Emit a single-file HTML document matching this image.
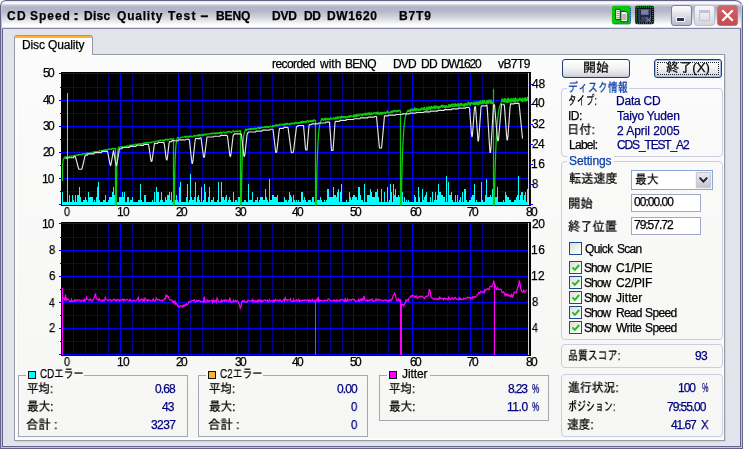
<!DOCTYPE html>
<html lang="ja"><head><meta charset="utf-8"><title>CD Speed : Disc Quality Test</title>
<style>
html,body{margin:0;padding:0;background:#fff;}
body{width:743px;height:449px;overflow:hidden;font-family:"Liberation Sans","IPAGothic",sans-serif;font-size:12px;}
#win{position:relative;width:743px;height:449px;overflow:hidden;background:#62628a;border-radius:6px 8px 0 0;}
#win div,#win span,#win i,#win b{position:absolute;box-sizing:border-box;}
.t{white-space:pre;line-height:16px;height:16px;will-change:transform;-webkit-text-stroke:0.25px currentColor;}
.frameL{left:1px;top:4px;width:1px;height:444px;background:#c3c3d9;}
.frameR{left:741px;top:4px;width:1px;height:444px;background:#c3c3d9;}
.frameB{left:1px;top:447px;width:741px;height:1px;background:#c3c3d9;}
.titlebar{left:1px;top:1px;width:741px;height:27px;border-radius:5px 7px 0 0;
  background:linear-gradient(to bottom,#d4d4e0 0px,#f6f6fa 1px,#ffffff 2.2px,#cacad8 4px,#b4b4c8 6px,#b6b6c9 10px,#cdcdd9 15px,#e6e6ec 20px,#fcfcfd 23.5px,#ffffff 25.5px,#dcdce6 26.6px,#d0d0dc 27px);}
.client{left:3px;top:29px;width:737px;height:417px;background:#e3e3eb;}
.pane{left:14px;top:54px;width:711px;height:387px;border:1px solid #949aa6;
  background:linear-gradient(to bottom,#fbfbfb 0,#f6f6f4 100%);box-shadow:1px 1px 0 #d6d5cc,inset 0 0 0 2px #fdfdfd;}
.tab{left:14px;top:35px;width:79px;height:20px;border:1px solid #949aa6;border-bottom:none;border-radius:3px 3px 0 0;background:#fbfbfb;overflow:hidden;}
.tab i{left:-1px;top:-1px;width:79px;height:3px;background:#ffb428;border-radius:3px 3px 0 0;}
.btn{height:19px;border:1px solid #1c3c74;border-radius:3px;background:linear-gradient(to bottom,#ffffff 0,#f4f4f6 45%,#dcdce6 85%,#c6c6d6 100%);}
.btn.def{box-shadow:inset 0 0 0 1px #a8bce8;}
.btn.def i{left:2px;top:2px;right:2px;bottom:2px;border:1px dotted #222;}
.grp{border:1px solid #cdcde0;border-radius:4px;}
.grpb{border:1px solid #a3a9b3;}
.cap{background:#f9f9f8;height:12px;}
.sq{width:8px;height:8px;border:1px solid #111;}
.edit{border:1px solid #a0a8c6;background:#fff;}
.cb{width:13px;height:13px;border:1px solid #1c4a8c;background:linear-gradient(135deg,#dcdcd8 0,#f4f4f2 60%,#ffffff 100%);}
.cb svg{position:absolute;left:0px;top:0px;}
.tb{width:21px;height:21px;border-radius:3px;}

.tsep{left:1px;top:28px;width:741px;height:1px;background:#8686a6;}

</style></head><body>
<div id="win">
<div class="titlebar"></div><div class="tsep"></div>
<div class="frameL"></div><div class="frameR"></div><div class="frameB"></div>
<div class="client"></div>
<!-- title bar icons -->
<svg width="46" height="22" viewBox="0 0 46 22" style="position:absolute;left:611px;top:4px">
 <rect x="0.9" y="1.7" width="19" height="18.6" rx="2.2" fill="#08c808"/>
 <path d="M19.4 4v14.5q0 1.4 -1.4 1.4H3" stroke="#144a8a" stroke-width="1" fill="none" stroke-dasharray="1 1"/>
 <rect x="4.6" y="5.3" width="4.6" height="10.2" fill="#ececdc" stroke="#2a2a30" stroke-width="0.9"/>
 <path d="M5.6 7.5h2.8M5.6 9.5h2.8M5.6 11.5h2.8M5.6 13.5h2.8" stroke="#8a8a90" stroke-width="0.8"/>
 <path d="M9.9 7.4h5l1.9 1.9v8.4h-6.9z" fill="#f2f2e6" stroke="#1e1e24" stroke-width="0.9"/>
 <path d="M11.2 11h4.2M11.2 13h4.2M11.2 15h4.2" stroke="#70707a" stroke-width="0.9"/>
 <rect x="24.1" y="1.7" width="19" height="18.6" rx="2.2" fill="#0c1418"/>
 <rect x="25.4" y="3" width="16.4" height="16" rx="1.5" fill="none" stroke="#10b010" stroke-width="1.3" stroke-dasharray="1 1"/>
 <rect x="28" y="5.4" width="11.4" height="11.6" fill="#20283c" stroke="#50587c" stroke-width="0.9"/>
 <rect x="30" y="5.8" width="7.6" height="5" fill="#7a7ea8"/>
 <rect x="30.4" y="12.8" width="6.8" height="4" fill="#3c4464"/>
 <path d="M35 13.5l5 4.5M40 13.5l-5 4.5" stroke="#8c90b4" stroke-width="1"/>
</svg>
<div class="tb" style="left:671px;top:5px;background:linear-gradient(to bottom,#fdfdfe 0,#e4e4ec 40%,#b8b8cc 100%);border:1px solid #7c7ca6;">
 <b style="left:4px;top:11px;width:9px;height:5px;background:#2a3152;border:1px solid #f4f4fa;"></b></div>
<div class="tb" style="left:694px;top:5px;background:linear-gradient(to bottom,#fafafc 0,#e8e8ee 50%,#d4d4de 100%);border:1px solid #c0c0d2;">
 <b style="left:4px;top:4px;width:11px;height:11px;border:1px solid #c4c4d0;border-top-width:3px;"></b></div>
<div class="tb" style="left:717px;top:5px;background:linear-gradient(to bottom,#d26468 0,#c9565b 50%,#c24e54 100%);border:1px solid #c8747a;">
 <svg width="19" height="19" viewBox="0 0 19 19" style="position:absolute;left:0;top:0"><path d="M5 5L14 14M14 5L5 14" stroke="#fff" stroke-width="2.2" fill="none" stroke-linecap="square"/></svg></div>

<div class="pane"></div>
<div class="tab"><i></i></div>
<svg width="743" height="449" viewBox="0 0 743 449" style="position:absolute;left:0;top:0" shape-rendering="crispEdges">
<rect x="61" y="72" width="470" height="134" fill="#000"/>
<rect x="73" y="73" width="1" height="132" fill="#000092"/>
<rect x="85" y="73" width="1" height="132" fill="#000092"/>
<rect x="97" y="73" width="1" height="132" fill="#000092"/>
<rect x="108" y="73" width="1" height="132" fill="#000092"/>
<rect x="120" y="73" width="1" height="132" fill="#0000ff"/>
<rect x="132" y="73" width="1" height="132" fill="#000092"/>
<rect x="143" y="73" width="1" height="132" fill="#000092"/>
<rect x="155" y="73" width="1" height="132" fill="#000092"/>
<rect x="167" y="73" width="1" height="132" fill="#000092"/>
<rect x="178" y="73" width="1" height="132" fill="#0000ff"/>
<rect x="190" y="73" width="1" height="132" fill="#000092"/>
<rect x="202" y="73" width="1" height="132" fill="#000092"/>
<rect x="213" y="73" width="1" height="132" fill="#000092"/>
<rect x="225" y="73" width="1" height="132" fill="#000092"/>
<rect x="237" y="73" width="1" height="132" fill="#0000ff"/>
<rect x="248" y="73" width="1" height="132" fill="#000092"/>
<rect x="260" y="73" width="1" height="132" fill="#000092"/>
<rect x="272" y="73" width="1" height="132" fill="#000092"/>
<rect x="283" y="73" width="1" height="132" fill="#000092"/>
<rect x="295" y="73" width="1" height="132" fill="#0000ff"/>
<rect x="307" y="73" width="1" height="132" fill="#000092"/>
<rect x="318" y="73" width="1" height="132" fill="#000092"/>
<rect x="330" y="73" width="1" height="132" fill="#000092"/>
<rect x="342" y="73" width="1" height="132" fill="#000092"/>
<rect x="353" y="73" width="1" height="132" fill="#0000ff"/>
<rect x="365" y="73" width="1" height="132" fill="#000092"/>
<rect x="377" y="73" width="1" height="132" fill="#000092"/>
<rect x="388" y="73" width="1" height="132" fill="#000092"/>
<rect x="400" y="73" width="1" height="132" fill="#000092"/>
<rect x="412" y="73" width="1" height="132" fill="#0000ff"/>
<rect x="423" y="73" width="1" height="132" fill="#000092"/>
<rect x="435" y="73" width="1" height="132" fill="#000092"/>
<rect x="447" y="73" width="1" height="132" fill="#000092"/>
<rect x="458" y="73" width="1" height="132" fill="#000092"/>
<rect x="470" y="73" width="1" height="132" fill="#0000ff"/>
<rect x="482" y="73" width="1" height="132" fill="#000092"/>
<rect x="493" y="73" width="1" height="132" fill="#000092"/>
<rect x="505" y="73" width="1" height="132" fill="#000092"/>
<rect x="517" y="73" width="1" height="132" fill="#000092"/>
<rect x="59" y="73" width="469" height="1" fill="#0000ff"/>
<rect x="60" y="87" width="468" height="1" fill="#0000a0"/>
<rect x="59" y="100" width="469" height="1" fill="#0000ff"/>
<rect x="60" y="113" width="468" height="1" fill="#0000a0"/>
<rect x="59" y="126" width="469" height="1" fill="#0000ff"/>
<rect x="60" y="139" width="468" height="1" fill="#0000a0"/>
<rect x="59" y="152" width="469" height="1" fill="#0000ff"/>
<rect x="60" y="165" width="468" height="1" fill="#0000a0"/>
<rect x="59" y="178" width="469" height="1" fill="#0000ff"/>
<rect x="60" y="191" width="468" height="1" fill="#0000a0"/>
<rect x="59" y="204" width="469" height="1" fill="#0000ff"/>
<rect x="61" y="222" width="470" height="134" fill="#000"/>
<rect x="73" y="223" width="1" height="132" fill="#000092"/>
<rect x="85" y="223" width="1" height="132" fill="#000092"/>
<rect x="97" y="223" width="1" height="132" fill="#000092"/>
<rect x="108" y="223" width="1" height="132" fill="#000092"/>
<rect x="120" y="223" width="1" height="132" fill="#0000ff"/>
<rect x="132" y="223" width="1" height="132" fill="#000092"/>
<rect x="143" y="223" width="1" height="132" fill="#000092"/>
<rect x="155" y="223" width="1" height="132" fill="#000092"/>
<rect x="167" y="223" width="1" height="132" fill="#000092"/>
<rect x="178" y="223" width="1" height="132" fill="#0000ff"/>
<rect x="190" y="223" width="1" height="132" fill="#000092"/>
<rect x="202" y="223" width="1" height="132" fill="#000092"/>
<rect x="213" y="223" width="1" height="132" fill="#000092"/>
<rect x="225" y="223" width="1" height="132" fill="#000092"/>
<rect x="237" y="223" width="1" height="132" fill="#0000ff"/>
<rect x="248" y="223" width="1" height="132" fill="#000092"/>
<rect x="260" y="223" width="1" height="132" fill="#000092"/>
<rect x="272" y="223" width="1" height="132" fill="#000092"/>
<rect x="283" y="223" width="1" height="132" fill="#000092"/>
<rect x="295" y="223" width="1" height="132" fill="#0000ff"/>
<rect x="307" y="223" width="1" height="132" fill="#000092"/>
<rect x="318" y="223" width="1" height="132" fill="#000092"/>
<rect x="330" y="223" width="1" height="132" fill="#000092"/>
<rect x="342" y="223" width="1" height="132" fill="#000092"/>
<rect x="353" y="223" width="1" height="132" fill="#0000ff"/>
<rect x="365" y="223" width="1" height="132" fill="#000092"/>
<rect x="377" y="223" width="1" height="132" fill="#000092"/>
<rect x="388" y="223" width="1" height="132" fill="#000092"/>
<rect x="400" y="223" width="1" height="132" fill="#000092"/>
<rect x="412" y="223" width="1" height="132" fill="#0000ff"/>
<rect x="423" y="223" width="1" height="132" fill="#000092"/>
<rect x="435" y="223" width="1" height="132" fill="#000092"/>
<rect x="447" y="223" width="1" height="132" fill="#000092"/>
<rect x="458" y="223" width="1" height="132" fill="#000092"/>
<rect x="470" y="223" width="1" height="132" fill="#0000ff"/>
<rect x="482" y="223" width="1" height="132" fill="#000092"/>
<rect x="493" y="223" width="1" height="132" fill="#000092"/>
<rect x="505" y="223" width="1" height="132" fill="#000092"/>
<rect x="517" y="223" width="1" height="132" fill="#000092"/>
<rect x="59" y="223" width="469" height="1" fill="#0000ff"/>
<rect x="60" y="237" width="468" height="1" fill="#0000a0"/>
<rect x="59" y="250" width="469" height="1" fill="#0000ff"/>
<rect x="60" y="263" width="468" height="1" fill="#0000a0"/>
<rect x="59" y="276" width="469" height="1" fill="#0000ff"/>
<rect x="60" y="289" width="468" height="1" fill="#0000a0"/>
<rect x="59" y="302" width="469" height="1" fill="#0000ff"/>
<rect x="60" y="315" width="468" height="1" fill="#0000a0"/>
<rect x="59" y="328" width="469" height="1" fill="#0000ff"/>
<rect x="60" y="341" width="468" height="1" fill="#0000a0"/>
<rect x="59" y="354" width="469" height="1" fill="#0000ff"/>
<path d="M530.25 73V205" stroke="#0000e0" stroke-width="1.5" stroke-dasharray="1 1" fill="none"/>
<rect x="529" y="84" width="4" height="1" fill="#0000ff"/>
<rect x="529" y="104" width="4" height="1" fill="#0000ff"/>
<rect x="529" y="124" width="4" height="1" fill="#0000ff"/>
<rect x="529" y="144" width="4" height="1" fill="#0000ff"/>
<rect x="529" y="164" width="4" height="1" fill="#0000ff"/>
<rect x="529" y="184" width="4" height="1" fill="#0000ff"/>
<rect x="529" y="204" width="4" height="1" fill="#0000ff"/>
<path d="M62 205v-13h1v13zM63 205v-3h1v3zM64 205v-3h1v3zM65 205v-3h1v3zM66 205v-3h1v3zM67 205v-112h1v112zM68 205v-3h1v3zM69 205v-10h1v10zM70 205v-3h1v3zM71 205v-3h1v3zM72 205v-10h1v10zM73 205v-5h1v5zM74 205v-3h1v3zM75 205v-10h1v10zM76 205v-3h1v3zM77 205v-10h1v10zM78 205v-10h1v10zM79 205v-18h1v18zM80 205v-8h1v8zM81 205v-3h1v3zM82 205v-3h1v3zM83 205v-5h1v5zM84 205v-5h1v5zM85 205v-8h1v8zM86 205v-5h1v5zM87 205v-3h1v3zM88 205v-13h1v13zM89 205v-8h1v8zM90 205v-8h1v8zM91 205v-8h1v8zM92 205v-8h1v8zM93 205v-3h1v3zM94 205v-5h1v5zM95 205v-3h1v3zM96 205v-8h1v8zM97 205v-18h1v18zM98 205v-23h1v23zM99 205v-5h1v5zM100 205v-3h1v3zM101 205v-3h1v3zM102 205v-3h1v3zM103 205v-5h1v5zM104 205v-5h1v5zM105 205v-10h1v10zM106 205v-3h1v3zM107 205v-3h1v3zM108 205v-5h1v5zM109 205v-8h1v8zM110 205v-8h1v8zM111 205v-8h1v8zM112 205v-13h1v13zM113 205v-18h1v18zM114 205v-10h1v10zM115 205v-5h1v5zM116 205v-13h1v13zM117 205v-3h1v3zM118 205v-3h1v3zM119 205v-8h1v8zM120 205v-8h1v8zM121 205v-8h1v8zM122 205v-13h1v13zM123 205v-8h1v8zM124 205v-13h1v13zM125 205v-3h1v3zM126 205v-3h1v3zM127 205v-8h1v8zM128 205v-8h1v8zM129 205v-3h1v3zM130 205v-5h1v5zM131 205v-5h1v5zM132 205v-8h1v8zM133 205v-3h1v3zM134 205v-3h1v3zM135 205v-3h1v3zM136 205v-3h1v3zM137 205v-3h1v3zM138 205v-5h1v5zM139 205v-5h1v5zM140 205v-21h1v21zM141 205v-5h1v5zM142 205v-3h1v3zM143 205v-3h1v3zM144 205v-10h1v10zM145 205v-10h1v10zM146 205v-3h1v3zM147 205v-3h1v3zM148 205v-3h1v3zM149 205v-3h1v3zM150 205v-3h1v3zM151 205v-3h1v3zM152 205v-5h1v5zM153 205v-3h1v3zM154 205v-13h1v13zM155 205v-3h1v3zM156 205v-18h1v18zM157 205v-13h1v13zM158 205v-13h1v13zM159 205v-3h1v3zM160 205v-5h1v5zM161 205v-13h1v13zM162 205v-5h1v5zM163 205v-3h1v3zM164 205v-3h1v3zM165 205v-8h1v8zM166 205v-5h1v5zM167 205v-10h1v10zM168 205v-10h1v10zM169 205v-13h1v13zM170 205v-5h1v5zM171 205v-13h1v13zM172 205v-3h1v3zM173 205v-3h1v3zM174 205v-16h1v16zM175 205v-5h1v5zM176 205v-10h1v10zM177 205v-5h1v5zM178 205v-3h1v3zM179 205v-18h1v18zM180 205v-23h1v23zM181 205v-3h1v3zM182 205v-3h1v3zM183 205v-3h1v3zM184 205v-3h1v3zM185 205v-3h1v3zM186 205v-8h1v8zM187 205v-21h1v21zM188 205v-3h1v3zM189 205v-5h1v5zM190 205v-31h1v31zM191 205v-8h1v8zM192 205v-5h1v5zM193 205v-5h1v5zM194 205v-8h1v8zM195 205v-23h1v23zM196 205v-3h1v3zM197 205v-8h1v8zM198 205v-10h1v10zM199 205v-5h1v5zM200 205v-3h1v3zM201 205v-18h1v18zM202 205v-3h1v3zM203 205v-5h1v5zM204 205v-21h1v21zM205 205v-13h1v13zM206 205v-3h1v3zM207 205v-3h1v3zM208 205v-8h1v8zM209 205v-18h1v18zM210 205v-3h1v3zM211 205v-5h1v5zM212 205v-5h1v5zM213 205v-8h1v8zM214 205v-3h1v3zM215 205v-3h1v3zM216 205v-3h1v3zM217 205v-5h1v5zM218 205v-23h1v23zM219 205v-3h1v3zM220 205v-3h1v3zM221 205v-23h1v23zM222 205v-8h1v8zM223 205v-8h1v8zM224 205v-5h1v5zM225 205v-8h1v8zM226 205v-10h1v10zM227 205v-3h1v3zM228 205v-5h1v5zM229 205v-8h1v8zM230 205v-5h1v5zM231 205v-3h1v3zM232 205v-3h1v3zM233 205v-13h1v13zM234 205v-3h1v3zM235 205v-5h1v5zM236 205v-5h1v5zM237 205v-3h1v3zM238 205v-8h1v8zM239 205v-8h1v8zM240 205v-8h1v8zM241 205v-31h1v31zM242 205v-3h1v3zM243 205v-3h1v3zM244 205v-5h1v5zM245 205v-5h1v5zM246 205v-3h1v3zM247 205v-3h1v3zM248 205v-21h1v21zM249 205v-5h1v5zM250 205v-5h1v5zM251 205v-5h1v5zM252 205v-13h1v13zM253 205v-3h1v3zM254 205v-3h1v3zM255 205v-5h1v5zM256 205v-5h1v5zM257 205v-8h1v8zM258 205v-3h1v3zM259 205v-5h1v5zM260 205v-8h1v8zM261 205v-8h1v8zM262 205v-8h1v8zM263 205v-5h1v5zM264 205v-5h1v5zM265 205v-16h1v16zM266 205v-8h1v8zM267 205v-5h1v5zM268 205v-3h1v3zM269 205v-26h1v26zM270 205v-5h1v5zM271 205v-5h1v5zM272 205v-10h1v10zM273 205v-10h1v10zM274 205v-8h1v8zM275 205v-8h1v8zM276 205v-8h1v8zM277 205v-10h1v10zM278 205v-3h1v3zM279 205v-3h1v3zM280 205v-3h1v3zM281 205v-3h1v3zM282 205v-3h1v3zM283 205v-3h1v3zM284 205v-8h1v8zM285 205v-5h1v5zM286 205v-5h1v5zM287 205v-3h1v3zM288 205v-5h1v5zM289 205v-13h1v13zM290 205v-10h1v10zM291 205v-8h1v8zM292 205v-3h1v3zM293 205v-10h1v10zM294 205v-5h1v5zM295 205v-3h1v3zM296 205v-5h1v5zM297 205v-3h1v3zM298 205v-5h1v5zM299 205v-3h1v3zM300 205v-3h1v3zM301 205v-13h1v13zM302 205v-13h1v13zM303 205v-5h1v5zM304 205v-8h1v8zM305 205v-5h1v5zM306 205v-3h1v3zM307 205v-3h1v3zM308 205v-5h1v5zM309 205v-5h1v5zM310 205v-5h1v5zM311 205v-3h1v3zM312 205v-8h1v8zM313 205v-8h1v8zM314 205v-3h1v3zM315 205v-3h1v3zM316 205v-10h1v10zM317 205v-5h1v5zM318 205v-5h1v5zM319 205v-5h1v5zM320 205v-8h1v8zM321 205v-5h1v5zM322 205v-3h1v3zM323 205v-3h1v3zM324 205v-5h1v5zM325 205v-3h1v3zM326 205v-5h1v5zM327 205v-16h1v16zM328 205v-16h1v16zM329 205v-8h1v8zM330 205v-8h1v8zM331 205v-8h1v8zM332 205v-8h1v8zM333 205v-18h1v18zM334 205v-10h1v10zM335 205v-10h1v10zM336 205v-8h1v8zM337 205v-13h1v13zM338 205v-16h1v16zM339 205v-3h1v3zM340 205v-13h1v13zM341 205v-21h1v21zM342 205v-3h1v3zM343 205v-3h1v3zM344 205v-3h1v3zM345 205v-3h1v3zM346 205v-5h1v5zM347 205v-3h1v3zM348 205v-3h1v3zM349 205v-13h1v13zM350 205v-8h1v8zM351 205v-5h1v5zM352 205v-8h1v8zM353 205v-10h1v10zM354 205v-10h1v10zM355 205v-8h1v8zM356 205v-8h1v8zM357 205v-5h1v5zM358 205v-18h1v18zM359 205v-18h1v18zM360 205v-10h1v10zM361 205v-5h1v5zM362 205v-5h1v5zM363 205v-3h1v3zM364 205v-21h1v21zM365 205v-3h1v3zM366 205v-3h1v3zM367 205v-10h1v10zM368 205v-10h1v10zM369 205v-10h1v10zM370 205v-16h1v16zM371 205v-13h1v13zM372 205v-8h1v8zM373 205v-8h1v8zM374 205v-8h1v8zM375 205v-13h1v13zM376 205v-13h1v13zM377 205v-16h1v16zM378 205v-8h1v8zM379 205v-3h1v3zM380 205v-3h1v3zM381 205v-16h1v16zM382 205v-3h1v3zM383 205v-3h1v3zM384 205v-13h1v13zM385 205v-3h1v3zM386 205v-3h1v3zM387 205v-18h1v18zM388 205v-3h1v3zM389 205v-5h1v5zM390 205v-21h1v21zM391 205v-13h1v13zM392 205v-3h1v3zM393 205v-21h1v21zM394 205v-10h1v10zM395 205v-16h1v16zM396 205v-8h1v8zM397 205v-8h1v8zM398 205v-10h1v10zM399 205v-8h1v8zM400 205v-5h1v5zM401 205v-5h1v5zM402 205v-13h1v13zM403 205v-3h1v3zM404 205v-8h1v8zM405 205v-3h1v3zM406 205v-5h1v5zM407 205v-3h1v3zM408 205v-5h1v5zM409 205v-3h1v3zM410 205v-3h1v3zM411 205v-3h1v3zM412 205v-3h1v3zM413 205v-3h1v3zM414 205v-10h1v10zM415 205v-8h1v8zM416 205v-3h1v3zM417 205v-3h1v3zM418 205v-18h1v18zM419 205v-8h1v8zM420 205v-3h1v3zM421 205v-3h1v3zM422 205v-16h1v16zM423 205v-5h1v5zM424 205v-8h1v8zM425 205v-10h1v10zM426 205v-13h1v13zM427 205v-3h1v3zM428 205v-3h1v3zM429 205v-3h1v3zM430 205v-8h1v8zM431 205v-3h1v3zM432 205v-13h1v13zM433 205v-3h1v3zM434 205v-5h1v5zM435 205v-13h1v13zM436 205v-5h1v5zM437 205v-10h1v10zM438 205v-21h1v21zM439 205v-13h1v13zM440 205v-13h1v13zM441 205v-10h1v10zM442 205v-10h1v10zM443 205v-8h1v8zM444 205v-8h1v8zM445 205v-3h1v3zM446 205v-29h1v29zM447 205v-3h1v3zM448 205v-23h1v23zM449 205v-10h1v10zM450 205v-10h1v10zM451 205v-13h1v13zM452 205v-5h1v5zM453 205v-3h1v3zM454 205v-3h1v3zM455 205v-10h1v10zM456 205v-3h1v3zM457 205v-10h1v10zM458 205v-3h1v3zM459 205v-5h1v5zM460 205v-8h1v8zM461 205v-3h1v3zM462 205v-13h1v13zM463 205v-3h1v3zM464 205v-16h1v16zM465 205v-16h1v16zM466 205v-5h1v5zM467 205v-3h1v3zM468 205v-3h1v3zM469 205v-5h1v5zM470 205v-5h1v5zM471 205v-8h1v8zM472 205v-10h1v10zM473 205v-10h1v10zM474 205v-21h1v21zM475 205v-3h1v3zM476 205v-5h1v5zM477 205v-3h1v3zM478 205v-3h1v3zM479 205v-3h1v3zM480 205v-3h1v3zM481 205v-23h1v23zM482 205v-5h1v5zM483 205v-3h1v3zM484 205v-3h1v3zM485 205v-10h1v10zM486 205v-26h1v26zM487 205v-8h1v8zM488 205v-8h1v8zM489 205v-8h1v8zM490 205v-10h1v10zM491 205v-8h1v8zM492 205v-16h1v16zM493 205v-3h1v3zM494 205v-3h1v3zM495 205v-8h1v8zM496 205v-8h1v8zM497 205v-18h1v18zM498 205v-3h1v3zM499 205v-3h1v3zM500 205v-3h1v3zM501 205v-3h1v3zM502 205v-3h1v3zM503 205v-5h1v5zM504 205v-3h1v3zM505 205v-13h1v13zM506 205v-10h1v10zM507 205v-8h1v8zM508 205v-8h1v8zM509 205v-5h1v5zM510 205v-5h1v5zM511 205v-3h1v3zM512 205v-3h1v3zM513 205v-3h1v3zM514 205v-5h1v5zM515 205v-5h1v5zM516 205v-8h1v8zM517 205v-10h1v10zM518 205v-29h1v29zM519 205v-5h1v5zM520 205v-10h1v10zM521 205v-13h1v13zM522 205v-13h1v13zM523 205v-5h1v5zM524 205v-10h1v10zM525 205v-13h1v13zM526 205v-3h1v3zM527 205v-16h1v16z" fill="#00ffff"/>
<polyline fill="none" stroke="#0ccc0c" stroke-width="1.25" stroke-linejoin="round" shape-rendering="auto" points="62.5,181.0 62.5,166.0 63.2,159.5 64.0,158.4 64.5,157.4 65.0,157.9 65.5,156.9 66.0,157.5 66.5,156.8 67.0,157.4 67.5,157.3 68.0,156.9 68.5,156.9 69.0,156.4 69.5,156.5 70.0,156.2 70.5,156.3 71.0,156.0 71.5,156.4 72.0,156.1 72.5,155.9 73.0,155.8 73.5,156.3 74.0,156.2 74.5,156.1 75.0,155.5 75.5,155.1 76.0,155.1 76.5,155.7 77.0,155.1 77.5,154.8 78.0,155.5 78.5,154.7 79.0,154.9 79.5,154.7 80.0,154.3 80.5,154.5 81.0,154.8 81.5,154.4 82.0,154.7 82.5,153.7 83.0,153.7 83.5,154.0 84.0,154.1 84.5,153.8 85.0,153.5 85.5,154.0 86.0,153.9 86.5,153.6 87.0,153.0 87.5,153.5 88.0,153.3 88.5,153.3 89.0,153.3 89.5,153.0 90.0,152.7 90.5,153.1 91.0,153.1 91.5,153.0 92.0,152.3 92.5,152.1 93.0,152.0 93.5,152.4 94.0,152.6 94.5,151.7 95.0,151.9 95.5,151.9 96.0,151.6 96.5,151.7 97.0,151.4 97.5,151.5 98.0,151.9 98.5,151.5 99.0,151.7 99.5,151.0 100.0,150.6 100.5,150.6 101.0,150.5 101.5,151.0 102.0,150.3 102.5,150.6 103.0,150.9 103.5,150.3 104.0,150.0 104.5,150.6 105.0,150.6 105.5,149.5 106.0,150.2 106.5,150.3 107.0,149.5 107.5,149.5 108.0,149.2 108.5,149.1 109.0,149.6 109.5,149.2 110.0,148.9 110.5,148.9 111.0,149.4 111.5,149.4 112.0,148.6 112.5,148.4 113.0,148.3 113.5,148.8 114.0,148.9 115.5,148.2 115.5,205.0 116.3,205.0 116.3,205.0 116.6,181.3 116.9,167.1 117.2,158.8 117.5,153.8 117.8,150.9 118.1,149.2 118.4,148.1 118.5,147.1 119.0,147.8 119.5,147.3 120.0,146.9 120.5,147.0 121.0,146.7 121.5,147.5 122.0,146.9 122.5,146.9 123.0,146.5 123.5,146.8 124.0,146.4 124.5,147.1 125.0,146.9 125.5,146.7 126.0,146.4 126.5,146.5 127.0,145.7 127.5,145.9 128.0,146.4 128.5,146.3 129.0,145.6 129.5,145.6 130.0,145.3 130.5,145.0 131.0,146.0 131.5,145.1 132.0,145.7 132.5,144.9 133.0,145.1 133.5,145.2 134.0,144.6 134.5,144.7 135.0,144.4 135.5,144.2 136.0,144.5 136.5,145.0 137.0,144.2 137.5,144.4 138.0,144.2 138.5,144.3 139.0,143.9 139.5,143.6 140.0,143.8 140.5,144.5 141.0,144.0 141.5,143.7 142.0,143.5 142.5,143.9 143.0,143.1 143.5,143.6 144.0,143.4 144.5,142.8 145.0,143.2 145.5,143.0 146.0,142.5 146.5,142.9 147.0,142.5 147.5,142.3 148.0,143.0 148.5,142.7 149.0,142.4 149.5,142.8 150.0,142.9 150.5,142.2 151.0,142.3 151.5,142.7 152.0,141.8 152.5,142.0 153.0,141.9 153.5,141.7 154.0,141.8 154.5,142.1 155.0,142.1 155.5,141.4 156.0,141.2 156.5,141.7 157.0,141.5 157.5,140.9 158.0,141.0 158.5,140.7 159.0,141.0 159.5,140.5 160.0,140.2 160.5,140.4 161.0,140.1 161.5,140.3 162.0,140.2 162.5,140.1 163.0,140.9 163.5,140.6 164.0,139.8 164.5,140.6 165.0,140.0 165.5,139.3 166.0,139.8 166.5,139.2 167.0,139.4 167.5,140.2 168.0,139.5 168.5,140.1 169.0,139.2 169.5,139.0 170.0,138.8 170.5,138.7 171.0,139.4 171.5,139.0 172.0,139.3 173.5,138.7 173.5,205.0 174.3,205.0 174.3,205.0 174.6,183.6 174.9,168.9 175.2,158.8 175.5,151.9 175.8,147.1 176.1,143.9 176.4,141.7 176.7,140.2 177.0,139.1 177.3,138.3 177.5,137.4 178.0,138.2 178.5,138.0 179.0,138.2 179.5,138.2 180.0,137.9 180.5,138.0 181.0,137.2 181.5,137.3 182.0,137.4 182.5,137.1 183.0,137.2 183.5,137.2 184.0,137.1 184.5,136.4 185.0,136.5 185.5,137.3 186.0,137.4 186.5,136.4 187.0,136.2 187.5,136.3 188.0,137.2 188.5,136.5 189.0,137.2 189.5,136.5 190.0,135.9 190.5,136.7 191.0,135.8 191.5,136.5 192.0,136.9 192.5,136.5 193.0,136.5 193.5,135.9 194.0,135.3 194.5,135.5 195.0,136.4 195.5,136.2 196.0,135.8 196.5,135.2 197.0,135.6 197.5,136.0 198.0,134.9 198.5,136.0 199.0,134.7 199.5,135.6 200.0,134.5 200.5,135.7 201.0,134.9 201.5,135.2 202.0,134.3 202.5,135.2 203.0,135.7 203.5,134.5 204.0,135.3 204.5,134.2 205.0,134.0 205.5,134.9 206.0,134.2 206.5,134.8 207.0,133.8 207.5,133.8 208.0,134.0 208.5,134.3 209.0,133.8 209.5,133.6 210.0,133.5 210.5,133.8 211.0,133.3 211.5,134.0 212.0,133.1 212.5,133.8 213.0,133.5 213.5,133.0 214.0,132.9 214.5,133.7 215.0,133.8 215.5,132.9 216.0,133.5 216.5,132.7 217.0,133.2 217.5,133.7 218.0,132.7 218.5,133.0 219.0,133.7 219.5,132.6 220.0,133.4 220.5,132.2 221.0,132.4 221.5,133.2 222.0,133.3 222.5,132.3 223.0,132.4 223.5,132.2 224.0,132.0 224.5,132.1 225.0,132.9 225.5,132.4 226.0,132.8 226.5,132.3 227.0,132.4 227.5,132.1 228.0,131.5 228.5,131.9 229.0,131.6 229.5,131.4 230.0,131.5 230.5,132.4 231.0,132.4 231.5,132.4 232.0,131.6 232.5,131.1 233.0,131.2 233.5,131.0 234.0,132.1 234.5,131.9 235.0,131.7 235.5,131.2 236.0,131.0 236.5,131.4 237.0,131.6 237.5,131.3 238.0,131.6 238.5,131.0 239.0,131.3 240.5,130.6 240.5,205.0 241.3,205.0 241.3,205.0 241.6,186.1 241.9,171.8 242.2,161.0 242.5,152.9 242.8,146.9 243.1,142.3 243.4,138.9 243.7,136.3 244.0,134.4 244.3,133.0 244.6,131.9 244.9,131.1 245.2,130.4 245.5,129.2 246.0,129.7 246.5,130.5 247.0,129.2 247.5,129.7 248.0,129.4 248.5,128.9 249.0,129.7 249.5,129.0 250.0,128.4 250.5,129.8 251.0,129.6 251.5,128.2 252.0,128.9 252.5,128.6 253.0,129.1 253.5,128.4 254.0,129.1 254.5,127.8 255.0,129.3 255.5,128.8 256.0,128.2 256.5,128.9 257.0,128.7 257.5,127.9 258.0,127.4 258.5,128.3 259.0,127.9 259.5,128.6 260.0,127.2 260.5,128.4 261.0,128.4 261.5,127.1 262.0,127.1 262.5,127.7 263.0,127.1 263.5,127.4 264.0,127.4 264.5,127.1 265.0,126.5 265.5,126.7 266.0,127.6 266.5,127.6 267.0,126.2 267.5,127.2 268.0,127.5 268.5,126.9 269.0,127.5 269.5,126.7 270.0,126.4 270.5,126.2 271.0,126.5 271.5,126.6 272.0,127.2 272.5,125.5 273.0,125.8 273.5,126.8 274.0,126.3 274.5,125.5 275.0,125.9 275.5,124.9 276.0,125.0 276.5,124.7 277.0,126.2 277.5,124.8 278.0,125.2 278.5,125.0 279.0,125.7 279.5,124.4 280.0,124.2 280.5,124.4 281.0,125.1 281.5,124.6 282.0,124.0 282.5,124.4 283.0,124.3 283.5,125.1 284.0,125.0 284.5,123.5 285.0,125.1 285.5,123.6 286.0,124.1 286.5,124.1 287.0,123.2 287.5,123.3 288.0,124.5 288.5,124.4 289.0,124.5 289.5,124.8 290.0,124.6 290.5,123.3 291.0,124.0 291.5,123.9 292.0,122.9 292.5,124.0 293.0,124.2 293.5,123.5 294.0,123.8 294.5,122.7 295.0,123.8 295.5,122.7 296.0,122.5 296.5,123.0 297.0,123.1 297.5,122.7 298.0,123.4 298.5,123.2 299.0,122.6 299.5,123.3 300.0,122.2 300.5,122.1 301.0,123.3 301.5,121.8 302.0,121.3 302.5,122.8 303.0,122.4 303.5,121.5 304.0,122.6 304.5,122.2 305.0,121.7 305.5,121.8 306.0,122.6 306.5,121.7 307.0,120.6 307.5,121.3 308.0,120.9 308.5,122.4 309.0,121.1 309.5,121.0 310.0,121.7 310.5,121.7 311.0,120.1 311.5,121.4 312.0,121.9 312.5,121.0 313.0,120.3 313.5,121.7 314.0,119.7 315.5,120.5 315.5,205.0 316.3,205.0 316.3,205.0 316.6,187.6 316.9,173.7 317.2,162.5 317.5,153.6 317.8,146.5 318.1,140.8 318.4,136.2 318.7,132.6 319.0,129.7 319.3,127.4 319.6,125.6 319.9,124.1 320.2,123.0 320.5,122.1 320.8,121.3 321.1,120.6 321.4,119.9 321.5,118.7 322.0,119.3 322.5,118.5 323.0,118.6 323.5,120.3 324.0,120.1 324.5,118.9 325.0,118.2 325.5,120.2 326.0,118.1 326.5,118.5 327.0,119.9 327.5,119.2 328.0,118.8 328.5,119.6 329.0,119.8 329.5,118.9 330.0,119.7 330.5,117.6 331.0,118.6 331.5,119.0 332.0,119.3 332.5,118.3 333.0,118.6 333.5,117.7 334.0,118.8 334.5,118.3 335.0,119.3 335.5,118.1 336.0,117.2 336.5,118.6 337.0,117.7 337.5,116.8 338.0,118.9 338.5,117.6 339.0,116.8 339.5,116.8 340.0,116.8 340.5,118.5 341.0,118.1 341.5,116.1 342.0,117.7 342.5,116.7 343.0,116.9 343.5,117.7 344.0,116.4 344.5,116.4 345.0,118.0 345.5,117.5 346.0,117.6 346.5,117.3 347.0,117.8 347.5,117.2 348.0,117.1 348.5,115.9 349.0,116.9 349.5,117.4 350.0,116.4 350.5,116.7 351.0,115.3 351.5,116.0 352.0,116.1 352.5,116.5 353.0,115.9 353.5,115.1 354.0,117.0 354.5,115.6 355.0,114.6 355.5,116.5 356.0,115.1 356.5,116.7 357.0,114.1 357.5,116.0 358.0,115.7 358.5,115.8 359.0,113.9 359.5,115.1 360.0,115.0 360.5,114.4 361.0,113.8 361.5,115.1 362.0,114.4 362.5,116.0 363.0,113.9 363.5,114.3 364.0,115.0 364.5,113.4 365.0,113.4 365.5,113.2 366.0,115.3 366.5,115.1 367.0,113.1 367.5,113.5 368.0,114.6 368.5,112.8 369.0,112.8 369.5,113.1 370.0,114.7 370.5,113.2 371.0,114.5 371.5,112.8 372.0,114.1 372.5,114.2 373.0,114.0 373.5,112.7 374.0,113.4 374.5,112.8 375.0,112.9 375.5,112.9 376.0,114.5 376.5,112.4 377.0,113.0 377.5,114.0 378.0,111.9 378.5,113.9 379.0,114.3 379.5,113.4 380.0,114.2 380.5,112.8 381.0,113.7 381.5,114.3 382.0,112.8 382.5,112.6 383.0,114.0 383.5,113.2 384.0,112.6 384.5,112.2 385.0,113.1 385.5,113.9 386.0,112.4 386.5,112.2 387.0,112.3 387.5,110.9 388.0,113.2 388.5,112.8 389.0,112.5 389.5,112.7 390.0,113.0 390.5,111.8 391.0,112.1 391.5,111.1 392.0,112.0 392.5,112.2 393.0,111.9 393.5,110.7 394.0,110.9 394.5,110.2 395.0,111.3 395.5,111.7 396.0,111.0 396.5,111.9 397.0,111.0 397.5,111.2 398.0,110.3 398.5,111.3 399.0,110.3 400.5,111.1 400.5,205.0 401.3,205.0 401.3,205.0 401.6,189.1 401.9,175.8 402.2,164.7 402.5,155.4 402.8,147.7 403.1,141.2 403.4,135.8 403.7,131.3 404.0,127.5 404.3,124.4 404.6,121.8 404.9,119.6 405.2,117.8 405.5,116.3 405.8,115.1 406.1,114.1 406.4,113.2 406.7,112.5 407.0,111.8 407.3,111.3 407.6,110.6 408.0,110.9 408.5,111.7 409.0,110.2 409.5,111.3 410.0,110.1 410.5,111.7 411.0,108.9 411.5,109.3 412.0,110.8 412.5,109.6 413.0,110.0 413.5,111.1 414.0,108.8 414.5,108.2 415.0,108.0 415.5,110.0 416.0,111.1 416.5,108.6 417.0,109.5 417.5,109.2 418.0,109.3 418.5,110.4 419.0,110.6 419.5,109.5 420.0,109.1 420.5,110.5 421.0,108.9 421.5,108.3 422.0,108.9 422.5,109.5 423.0,108.0 423.5,109.7 424.0,108.3 424.5,107.2 425.0,109.4 425.5,110.0 426.0,110.0 426.5,110.3 427.0,106.9 427.5,110.1 428.0,109.8 428.5,109.7 429.0,106.5 429.5,108.8 430.0,107.1 430.5,109.6 431.0,107.3 431.5,106.4 432.0,108.3 432.5,108.6 433.0,108.0 433.5,107.5 434.0,106.2 434.5,108.5 435.0,105.8 435.5,107.9 436.0,106.1 436.5,107.3 437.0,107.7 437.5,106.4 438.0,108.3 438.5,106.4 439.0,108.6 439.5,106.8 440.0,107.8 440.5,106.9 441.0,106.3 441.5,105.4 442.0,107.3 442.5,105.2 443.0,106.7 443.5,106.4 444.0,105.9 444.5,105.7 445.0,106.5 445.5,108.0 446.0,107.6 446.5,105.7 447.0,106.7 447.5,106.8 448.0,107.1 448.5,106.7 449.0,104.5 449.5,104.7 450.0,107.2 450.5,105.1 451.0,106.2 451.5,104.1 452.0,106.2 452.5,105.0 453.0,103.9 453.5,103.8 454.0,104.6 454.5,105.6 455.0,106.5 455.5,103.6 456.0,105.4 456.5,104.7 457.0,105.7 457.5,106.1 458.0,103.5 458.5,104.1 459.0,106.6 459.5,105.7 460.0,103.6 460.5,105.1 461.0,104.3 461.5,103.4 462.0,104.4 462.5,104.8 463.0,105.3 463.5,106.2 464.0,103.6 464.5,106.5 465.0,103.9 465.5,105.0 466.0,103.9 466.5,104.1 467.0,105.0 467.5,105.2 468.0,102.3 468.5,102.1 469.0,103.4 469.5,103.2 470.0,103.7 470.5,105.7 471.0,103.0 471.5,102.6 472.0,103.4 472.5,103.0 473.0,103.2 473.5,103.7 474.0,101.8 474.5,104.5 475.0,104.0 475.5,104.4 476.0,103.0 476.5,101.8 477.0,104.2 477.5,104.7 478.0,104.8 478.5,104.0 479.0,101.3 479.5,102.0 480.0,103.7 480.5,100.8 481.0,101.8 481.5,102.2 482.0,104.0 482.5,100.5 483.0,101.5 483.5,103.1 484.0,100.2 484.5,101.5 485.0,103.4 485.5,102.1 486.0,103.3 486.5,101.0 487.0,103.1 487.5,100.5 488.0,102.6 488.5,103.3 489.0,99.9 489.5,100.9 490.0,101.0 490.5,103.5 491.0,99.8 491.5,101.3 492.0,103.9 493.5,101.6 493.5,89.5 493.5,101.6 493.5,205.0 494.3,205.0 494.3,205.0 494.6,190.4 494.9,177.8 495.2,166.9 495.5,157.5 495.8,149.4 496.1,142.4 496.4,136.3 496.7,131.2 497.0,126.7 497.3,122.9 497.6,119.6 497.9,116.7 498.2,114.3 498.5,112.2 498.8,110.4 499.1,108.9 499.4,107.5 499.7,106.4 500.0,105.4 500.3,104.6 500.6,103.9 500.9,103.2 501.2,102.7 501.5,102.2 501.8,101.7 502.0,98.7 502.5,99.2 503.0,101.7 503.5,101.2 504.0,100.7 504.5,98.6 505.0,102.1 505.5,98.9 506.0,101.7 506.5,100.3 507.0,102.5 507.5,98.7 508.0,99.9 508.5,98.4 509.0,102.7 509.5,101.1 510.0,99.7 510.5,98.8 511.0,102.4 511.5,99.7 512.0,98.5 512.5,100.2 513.0,99.6 513.5,101.9 514.0,98.1 514.5,101.6 515.0,102.1 515.5,98.0 516.0,101.0 516.5,101.2 517.0,101.4 517.5,101.9 518.0,99.8 518.5,100.7 519.0,100.4 519.5,99.6 520.0,98.0 520.5,100.1 521.0,100.0 521.5,99.0 522.0,100.9 522.5,101.7 523.0,99.7 523.5,99.0 524.0,99.7 524.5,100.8 525.0,98.5 525.5,101.2 526.0,100.3 526.5,100.5 527.0,99.9 527.5,97.1 528.0,100.1"/>
<polyline fill="none" stroke="#0ccc0c" stroke-width="1" stroke-linejoin="round" shape-rendering="auto" points="250.0,129.6 250.4,129.3 250.8,129.4 251.2,128.8 251.6,129.0 252.0,129.2 252.4,129.3 252.8,128.5 253.2,128.5 253.6,128.5 254.0,128.5 254.4,128.8 254.8,128.5 255.2,128.9 255.6,128.6 256.0,128.6 256.4,128.7 256.8,128.6 257.2,127.8 257.6,128.1 258.0,128.3 258.4,128.3 258.8,128.4 259.2,127.7 259.6,127.9 260.0,128.2 260.4,127.5 260.8,127.3 261.2,127.6 261.6,127.4 262.0,127.2 262.4,127.4 262.8,127.6 263.2,127.6 263.6,127.7 264.0,127.1 264.4,127.1 264.8,127.6 265.2,126.7 265.6,127.2 266.0,126.7 266.4,127.2 266.8,126.6 267.2,127.2 267.6,126.6 268.0,127.2 268.4,126.8 268.8,126.9 269.2,126.3 269.6,126.7 270.0,126.7 270.4,126.4 270.8,126.4 271.2,126.4 271.6,126.6 272.0,126.7 272.4,126.5 272.8,126.1 273.2,125.7 273.6,126.1 274.0,126.4 274.4,125.6 274.8,125.5 275.2,125.5 275.6,125.3 276.0,125.7 276.4,125.3 276.8,126.0 277.2,125.9 277.6,125.8 278.0,125.4 278.4,125.3 278.8,125.5 279.2,125.2 279.6,125.3 280.0,124.7 280.4,125.1 280.8,125.1 281.2,124.7 281.6,124.6 282.0,124.8 282.4,125.2 282.8,125.3 283.2,124.9 283.6,124.5 284.0,124.4 284.4,125.0 284.8,124.2 285.2,124.5 285.6,124.6 286.0,124.1 286.4,124.7 286.8,124.0 287.2,124.7 287.6,124.3 288.0,124.1 288.4,124.1 288.8,124.4 289.2,124.3 289.6,123.3 290.0,123.6 290.4,123.2 290.8,123.6 291.2,123.8 291.6,123.4 292.0,123.6 292.4,123.1 292.8,123.1 293.2,123.2 293.6,123.0 294.0,123.5 294.4,123.5 294.8,122.9 295.2,123.4 295.6,122.8 296.0,123.3 296.4,123.1 296.8,122.8 297.2,123.1 297.6,123.1 298.0,122.4 298.4,123.1 298.8,122.4 299.2,122.0 299.6,123.0 300.0,123.0 300.4,122.5 300.8,121.8 301.2,121.7 301.6,122.5 302.0,122.4 302.4,122.5 302.8,122.6 303.2,122.1 303.6,122.3 304.0,121.7 304.4,121.7 304.8,121.9 305.2,121.5 305.6,121.9 306.0,122.1 306.4,121.5 306.8,122.0 307.2,121.8 307.6,121.2 308.0,120.9 308.4,121.1 308.8,121.4 309.2,121.3 309.6,120.8 310.0,121.4 310.4,120.9 310.8,120.9 311.2,120.5 311.6,121.2 312.0,120.6 312.4,120.5 312.8,121.3 313.2,120.5 313.6,121.1 314.0,120.1"/>
<polyline fill="none" stroke="#0ccc0c" stroke-width="1" stroke-linejoin="round" shape-rendering="auto" points="322.0,119.7 322.4,119.8 322.8,119.8 323.2,119.5 323.6,119.0 324.0,119.5 324.4,119.9 324.8,119.1 325.2,119.2 325.6,119.4 326.0,119.0 326.4,119.3 326.8,119.0 327.2,118.6 327.6,119.0 328.0,118.3 328.4,118.3 328.8,118.7 329.2,118.6 329.6,119.1 330.0,118.1 330.4,118.4 330.8,118.7 331.2,118.6 331.6,118.7 332.0,118.6 332.4,119.0 332.8,118.0 333.2,118.3 333.6,117.7 334.0,118.6 334.4,118.2 334.8,118.8 335.2,117.5 335.6,118.1 336.0,117.6 336.4,117.8 336.8,118.5 337.2,117.4 337.6,117.2 338.0,117.6 338.4,117.3 338.8,118.0 339.2,117.9 339.6,117.2 340.0,118.0 340.4,117.0 340.8,116.7 341.2,116.8 341.6,117.4 342.0,117.6 342.4,117.5 342.8,116.6 343.2,116.9 343.6,117.5 344.0,117.2 344.4,117.3 344.8,116.4 345.2,117.3 345.6,116.3 346.0,116.0 346.4,116.6 346.8,116.9 347.2,116.8 347.6,116.5 348.0,116.0 348.4,116.5 348.8,116.3 349.2,115.6 349.6,115.9 350.0,116.1 350.4,116.5 350.8,116.9 351.2,116.8 351.6,116.1 352.0,115.8 352.4,116.5 352.8,116.4 353.2,116.6 353.6,115.4 354.0,116.5 354.4,115.8 354.8,115.9 355.2,115.2 355.6,116.2 356.0,114.9 356.4,115.8 356.8,116.1 357.2,115.8 357.6,114.8 358.0,116.0 358.4,115.8 358.8,116.0 359.2,115.6 359.6,115.8 360.0,114.6 360.4,114.5 360.8,114.5 361.2,114.8 361.6,114.3 362.0,115.4 362.4,115.3 362.8,114.4 363.2,114.2 363.6,114.0 364.0,114.0 364.4,114.1 364.8,114.1 365.2,114.7 365.6,113.6 366.0,114.4 366.4,114.8 366.8,113.8 367.2,114.4 367.6,113.7 368.0,114.8 368.4,114.1 368.8,113.8 369.2,114.7 369.6,114.0 370.0,113.7 370.4,113.3 370.8,113.2 371.2,113.5 371.6,112.9 372.0,114.4 372.4,114.4 372.8,114.3 373.2,113.6 373.6,113.3 374.0,113.2 374.4,112.9 374.8,113.1 375.2,113.1 375.6,113.4 376.0,112.8 376.4,113.4 376.8,113.3 377.2,112.6 377.6,113.3 378.0,113.9 378.4,113.6 378.8,113.2 379.2,112.6 379.6,113.4 380.0,112.5 380.4,113.6 380.8,112.5 381.2,112.3 381.6,113.3 382.0,112.2 382.4,112.3 382.8,113.1 383.2,112.4 383.6,112.4 384.0,113.4 384.4,113.3 384.8,113.5 385.2,112.6 385.6,112.2 386.0,112.6 386.4,112.2 386.8,113.2 387.2,111.8 387.6,112.9 388.0,112.8 388.4,111.7 388.8,112.7 389.2,112.5 389.6,112.6 390.0,112.1 390.4,111.3 390.8,111.9 391.2,112.8 391.6,112.7 392.0,111.5 392.4,112.1 392.8,110.8 393.2,112.2 393.6,111.8 394.0,111.4 394.4,111.1 394.8,110.7 395.2,111.0 395.6,111.3 396.0,111.3 396.4,110.7 396.8,111.8 397.2,110.3 397.6,110.6 398.0,110.8 398.4,110.5 398.8,111.8 399.2,112.1"/>
<polyline fill="none" stroke="#0ccc0c" stroke-width="1" stroke-linejoin="round" shape-rendering="auto" points="408.4,110.2 408.8,109.9 409.2,111.0 409.6,110.7 410.0,110.5 410.4,111.0 410.8,109.1 411.2,110.2 411.6,109.4 412.0,111.0 412.4,108.9 412.8,110.7 413.2,110.8 413.6,108.8 414.0,110.6 414.4,109.7 414.8,110.6 415.2,109.5 415.6,110.7 416.0,109.1 416.4,108.8 416.8,109.8 417.2,110.6 417.6,108.8 418.0,109.8 418.4,108.8 418.8,109.0 419.2,109.5 419.6,109.9 420.0,109.2 420.4,110.2 420.8,109.5 421.2,107.9 421.6,109.3 422.0,107.8 422.4,108.3 422.8,109.0 423.2,108.6 423.6,109.3 424.0,108.6 424.4,109.5 424.8,108.8 425.2,108.9 425.6,108.9 426.0,108.6 426.4,108.6 426.8,107.3 427.2,107.6 427.6,108.0 428.0,107.7 428.4,107.6 428.8,108.8 429.2,108.1 429.6,107.4 430.0,108.6 430.4,107.3 430.8,107.6 431.2,107.3 431.6,108.5 432.0,108.0 432.4,106.7 432.8,108.4 433.2,107.0 433.6,107.2 434.0,106.7 434.4,108.0 434.8,107.8 435.2,107.0 435.6,108.9 436.0,107.3 436.4,106.5 436.8,108.3 437.2,107.4 437.6,107.3 438.0,107.6 438.4,107.2 438.8,107.1 439.2,106.0 439.6,108.0 440.0,107.3 440.4,107.7 440.8,105.8 441.2,106.9 441.6,106.5 442.0,107.0 442.4,107.4 442.8,106.1 443.2,107.4 443.6,107.3 444.0,105.5 444.4,107.7 444.8,107.0 445.2,105.9 445.6,107.6 446.0,105.2 446.4,106.6 446.8,107.4 447.2,107.0 447.6,107.5 448.0,106.2 448.4,107.4 448.8,104.9 449.2,107.1 449.6,105.2 450.0,106.5 450.4,107.4 450.8,106.0 451.2,106.9 451.6,106.4 452.0,106.9 452.4,104.3 452.8,105.7 453.2,106.2 453.6,106.3 454.0,106.9 454.4,104.6 454.8,105.6 455.2,105.9 455.6,105.2 456.0,106.7 456.4,105.4 456.8,104.0 457.2,105.7 457.6,106.0 458.0,105.8 458.4,105.1 458.8,105.0 459.2,106.2 459.6,105.7 460.0,105.6 460.4,105.9 460.8,103.7 461.2,105.5 461.6,105.9 462.0,105.5 462.4,106.1 462.8,104.4 463.2,105.5 463.6,105.4 464.0,105.3 464.4,104.6 464.8,104.4 465.2,105.8 465.6,103.5 466.0,103.8 466.4,103.3 466.8,105.4 467.2,105.3 467.6,103.7 468.0,103.8 468.4,105.0 468.8,104.5 469.2,103.8 469.6,105.4 470.0,104.0 470.4,102.6 470.8,103.4 471.2,103.3 471.6,102.6 472.0,104.1 472.4,103.8 472.8,104.3 473.2,104.9 473.6,102.6 474.0,102.8 474.4,103.9 474.8,104.2 475.2,104.0 475.6,101.8 476.0,104.3 476.4,102.4 476.8,101.8 477.2,104.8 477.6,101.8 478.0,104.6 478.4,102.0 478.8,102.0 479.2,104.4 479.6,103.7 480.0,104.5 480.4,101.2 480.8,103.4 481.2,102.5 481.6,101.9 482.0,102.4 482.4,103.7 482.8,102.4 483.2,104.0 483.6,104.0 484.0,102.8 484.4,101.0 484.8,101.0 485.2,102.4 485.6,103.4 486.0,104.0 486.4,103.0 486.8,100.3 487.2,103.6 487.6,102.4 488.0,100.7 488.4,102.7 488.8,103.5 489.2,101.1 489.6,102.1 490.0,102.3 490.4,102.2 490.8,101.1 491.2,101.9 491.6,103.3 492.0,101.9"/>
<polyline fill="none" stroke="#0ccc0c" stroke-width="1" stroke-linejoin="round" shape-rendering="auto" points="502.8,99.7 503.2,101.2 503.6,101.9 504.0,99.2 504.4,102.3 504.8,100.8 505.2,99.7 505.6,99.7 506.0,99.1 506.4,102.2 506.8,102.0 507.2,100.3 507.6,102.7 508.0,99.5 508.4,98.6 508.8,101.9 509.2,101.6 509.6,99.2 510.0,99.8 510.4,98.8 510.8,100.7 511.2,100.6 511.6,101.0 512.0,101.8 512.4,101.8 512.8,99.7 513.2,100.0 513.6,98.8 514.0,100.6 514.4,99.8 514.8,101.0 515.2,99.3 515.6,99.6 516.0,100.8 516.4,98.6 516.8,99.0 517.2,100.3 517.6,100.7 518.0,98.4 518.4,99.6 518.8,99.8 519.2,99.5 519.6,98.0 520.0,100.7 520.4,100.7 520.8,98.7 521.2,100.0 521.6,101.2 522.0,100.8 522.4,97.5 522.8,98.9 523.2,98.4 523.6,101.3 524.0,100.5 524.4,100.7 524.8,97.4 525.2,100.6 525.6,97.9 526.0,98.1 526.4,99.3 526.8,99.9 527.2,98.3 527.6,101.0 528.0,100.4"/>
<polyline fill="none" stroke="#e6e6e6" stroke-width="1.15" stroke-linejoin="round" shape-rendering="auto" points="66.0,159.0 66.5,157.7 67.0,157.7 67.5,157.7 68.0,157.7 68.5,157.7 69.0,157.7 69.5,157.7 70.0,157.7 70.5,157.7 71.0,157.7 71.5,157.7 72.0,157.7 72.5,157.7 73.0,157.7 73.5,157.7 74.0,156.4 74.5,156.4 75.0,156.4 75.5,157.3 76.0,159.0 76.5,160.9 77.0,162.7 77.5,164.6 78.0,166.5 78.5,168.4 79.0,169.2 79.5,169.2 80.0,169.2 80.5,169.2 81.0,169.2 81.5,169.2 82.0,168.8 82.5,166.7 83.0,164.6 83.5,162.5 84.0,160.4 84.5,158.2 85.0,156.0 85.5,155.1 86.0,155.1 86.5,155.1 87.0,155.1 87.5,155.1 88.0,153.8 88.5,153.8 89.0,153.8 89.5,153.8 90.0,153.8 90.5,153.8 91.0,153.8 91.5,153.8 92.0,153.8 92.5,153.8 93.0,153.8 93.5,153.8 94.0,153.8 94.5,152.6 95.0,152.6 95.5,152.6 96.0,152.6 96.5,152.6 97.0,152.6 97.5,152.6 98.0,152.6 98.5,152.6 99.0,152.6 99.5,152.6 100.0,152.6 100.5,152.6 101.0,152.6 101.5,152.6 102.0,151.3 102.5,151.3 103.0,151.3 103.5,151.3 104.0,151.3 104.5,151.3 105.0,151.3 105.5,151.3 106.0,151.3 106.5,151.3 107.0,151.3 107.5,151.3 108.0,153.7 108.5,156.2 109.0,158.8 109.5,161.4 110.0,164.1 110.5,165.7 111.0,164.1 111.5,161.3 112.0,158.6 112.5,155.8 113.0,152.9 113.5,150.6 114.0,153.3 114.5,156.1 115.0,158.9 115.5,161.7 116.0,164.6 116.5,165.7 117.0,163.4 117.5,160.4 118.0,157.5 118.5,154.5 119.0,151.5 119.5,148.7 120.0,148.7 120.5,148.7 121.0,148.7 121.5,148.7 122.0,148.7 122.5,147.5 123.0,147.5 123.5,147.5 124.0,147.5 124.5,147.5 125.0,147.5 125.5,147.5 126.0,147.5 126.5,147.5 127.0,147.5 127.5,147.5 128.0,147.5 128.5,147.5 129.0,147.5 129.5,147.5 130.0,146.4 130.5,146.4 131.0,146.4 131.5,146.4 132.0,146.4 132.5,146.4 133.0,146.4 133.5,146.4 134.0,146.4 134.5,146.4 135.0,146.4 135.5,146.4 136.0,146.4 136.5,145.2 137.0,145.2 137.5,145.2 138.0,145.2 138.5,145.2 139.0,145.2 139.5,145.2 140.0,145.2 140.5,145.3 141.0,145.3 141.5,145.3 142.0,145.3 142.5,145.3 143.0,145.3 143.5,145.4 144.0,144.2 144.5,144.3 145.0,144.3 145.5,144.3 146.0,144.3 146.5,144.3 147.0,144.3 147.5,144.3 148.0,144.4 148.5,144.4 149.0,147.3 149.5,150.6 150.0,154.0 150.5,157.4 151.0,160.8 151.5,161.5 152.0,160.8 152.5,157.3 153.0,153.8 153.5,150.3 154.0,146.7 154.5,143.4 155.0,143.4 155.5,143.5 156.0,143.5 156.5,143.5 157.0,143.5 157.5,143.5 158.0,142.4 158.5,142.4 159.0,142.4 159.5,142.5 160.0,142.5 160.5,142.5 161.0,142.5 161.5,142.5 162.0,142.5 162.5,142.5 163.0,142.6 163.5,142.6 164.0,142.6 164.5,145.1 165.0,149.2 165.5,153.4 166.0,157.5 166.5,160.0 167.0,160.0 167.5,156.6 168.0,152.4 168.5,148.1 169.0,143.8 169.5,141.6 170.0,141.6 170.5,141.7 171.0,141.7 171.5,141.7 172.0,140.6 172.5,140.6 173.0,140.6 173.5,140.6 174.0,140.6 174.5,140.7 175.0,140.7 175.5,140.7 176.0,140.7 176.5,140.7 177.0,140.7 177.5,140.8 178.0,140.8 178.5,139.8 179.0,139.8 179.5,139.8 180.0,139.8 180.5,139.8 181.0,139.9 181.5,139.9 182.0,139.9 182.5,139.9 183.0,139.9 183.5,139.9 184.0,140.0 184.5,140.0 185.0,140.0 185.5,140.0 186.0,139.2 186.5,139.2 187.0,139.2 187.5,139.3 188.0,139.3 188.5,139.3 189.0,139.3 189.5,140.9 190.0,145.6 190.5,150.2 191.0,154.9 191.5,159.5 192.0,163.3 192.5,163.3 193.0,160.5 193.5,155.7 194.0,150.9 194.5,146.1 195.0,141.3 195.5,138.5 196.0,138.5 196.5,138.5 197.0,138.5 197.5,138.6 198.0,138.6 198.5,138.6 199.0,138.6 199.5,138.6 200.0,137.7 200.5,137.7 201.0,137.8 201.5,141.5 202.0,145.3 202.5,149.1 203.0,152.9 203.5,156.7 204.0,157.5 204.5,156.7 205.0,152.8 205.5,148.9 206.0,145.0 206.5,141.1 207.0,137.1 207.5,137.0 208.0,137.0 208.5,137.0 209.0,137.0 209.5,137.0 210.0,137.0 210.5,137.0 211.0,137.0 211.5,137.0 212.0,137.0 212.5,137.0 213.0,137.0 213.5,137.0 214.0,136.2 214.5,136.2 215.0,136.2 215.5,136.2 216.0,136.2 216.5,136.2 217.0,136.2 217.5,136.2 218.0,136.2 218.5,136.2 219.0,136.2 219.5,136.2 220.0,136.2 220.5,135.4 221.0,135.4 221.5,135.4 222.0,135.4 222.5,135.4 223.0,135.4 223.5,135.4 224.0,135.4 224.5,135.4 225.0,135.4 225.5,135.4 226.0,135.4 226.5,135.4 227.0,135.4 227.5,136.5 228.0,140.5 228.5,144.7 229.0,148.8 229.5,153.0 230.0,156.3 230.5,156.3 231.0,153.8 231.5,149.5 232.0,145.3 232.5,141.0 233.0,136.7 233.5,134.6 234.0,134.6 234.5,133.8 235.0,133.8 235.5,133.8 236.0,133.8 236.5,133.8 237.0,133.8 237.5,133.8 238.0,133.8 238.5,133.8 239.0,133.8 239.5,133.8 240.0,133.8 240.5,133.8 241.0,133.8 241.5,135.0 242.0,139.4 242.5,143.8 243.0,148.2 243.5,152.7 244.0,156.3 244.5,156.3 245.0,153.6 245.5,149.0 246.0,144.4 246.5,139.8 247.0,135.2 247.5,132.9 248.0,132.9 248.5,132.0 249.0,132.0 249.5,132.0 250.0,132.0 250.5,132.0 251.0,132.0 251.5,132.0 252.0,132.0 252.5,132.0 253.0,132.0 253.5,132.0 254.0,132.0 254.5,132.0 255.0,132.0 255.5,132.0 256.0,131.1 256.5,131.1 257.0,131.1 257.5,131.1 258.0,131.1 258.5,131.1 259.0,131.1 259.5,131.1 260.0,131.1 260.5,131.1 261.0,131.1 261.5,131.1 262.0,131.1 262.5,130.1 263.0,130.1 263.5,130.1 264.0,130.1 264.5,130.1 265.0,130.1 265.5,130.1 266.0,130.1 266.5,130.1 267.0,130.1 267.5,130.1 268.0,130.2 268.5,130.2 269.0,130.2 269.5,130.2 270.0,129.2 270.5,129.2 271.0,129.2 271.5,129.2 272.0,129.2 272.5,129.2 273.0,129.2 273.5,133.3 274.0,137.6 274.5,142.0 275.0,146.3 275.5,150.7 276.0,152.5 276.5,152.5 277.0,149.8 277.5,145.4 278.0,140.9 278.5,136.4 279.0,131.8 279.5,128.3 280.0,128.3 280.5,128.3 281.0,128.3 281.5,128.3 282.0,128.3 282.5,128.3 283.0,128.3 283.5,128.3 284.0,127.3 284.5,127.3 285.0,127.3 285.5,127.4 286.0,127.4 286.5,127.4 287.0,127.4 287.5,127.4 288.0,127.4 288.5,130.9 289.0,134.7 289.5,138.6 290.0,142.5 290.5,146.4 291.0,150.3 291.5,152.7 292.0,152.7 292.5,152.7 293.0,152.7 293.5,151.1 294.0,147.1 294.5,143.0 295.0,139.0 295.5,134.9 296.0,130.8 296.5,126.7 297.0,126.4 297.5,126.4 298.0,125.5 298.5,125.5 299.0,125.5 299.5,125.5 300.0,125.5 300.5,125.5 301.0,125.5 301.5,125.5 302.0,125.5 302.5,125.5 303.0,125.5 303.5,125.5 304.0,130.9 304.5,136.8 305.0,142.8 305.5,148.8 306.0,150.0 306.5,150.0 307.0,150.0 307.5,143.9 308.0,137.8 308.5,131.7 309.0,125.5 309.5,124.6 310.0,124.6 310.5,124.7 311.0,124.7 311.5,124.7 312.0,123.8 312.5,123.8 313.0,123.8 313.5,123.8 314.0,123.8 314.5,123.8 315.0,123.8 315.5,123.8 316.0,123.8 316.5,123.8 317.0,123.8 317.5,123.8 318.0,123.8 318.5,123.0 319.0,123.0 319.5,123.0 320.0,123.0 320.5,123.0 321.0,123.0 321.5,123.0 322.0,123.0 322.5,123.0 323.0,123.0 323.5,123.0 324.0,123.0 324.5,123.0 325.0,123.0 325.5,123.0 326.0,122.1 326.5,122.1 327.0,122.1 327.5,122.1 328.0,122.1 328.5,122.1 329.0,122.1 329.5,122.1 330.0,128.9 330.5,136.0 331.0,143.1 331.5,150.3 332.0,150.3 332.5,150.3 333.0,150.3 333.5,144.5 334.0,137.3 334.5,130.0 335.0,122.6 335.5,121.3 336.0,121.3 336.5,121.3 337.0,121.3 337.5,121.3 338.0,121.3 338.5,121.3 339.0,121.3 339.5,121.3 340.0,120.4 340.5,120.4 341.0,120.4 341.5,120.4 342.0,120.4 342.5,120.4 343.0,120.4 343.5,120.4 344.0,120.4 344.5,120.4 345.0,120.4 345.5,120.4 346.0,120.4 346.5,119.5 347.0,119.5 347.5,119.5 348.0,119.5 348.5,119.5 349.0,119.5 349.5,119.5 350.0,119.5 350.5,119.5 351.0,119.5 351.5,119.5 352.0,119.5 352.5,119.5 353.0,119.5 353.5,119.5 354.0,118.7 354.5,118.7 355.0,118.7 355.5,118.7 356.0,118.7 356.5,118.7 357.0,118.7 357.5,118.7 358.0,118.7 358.5,118.7 359.0,118.7 359.5,118.7 360.0,118.7 360.5,117.8 361.0,117.8 361.5,117.8 362.0,117.8 362.5,117.8 363.0,117.8 363.5,117.8 364.0,117.8 364.5,117.8 365.0,117.8 365.5,117.8 366.0,117.8 366.5,117.8 367.0,117.8 367.5,117.8 368.0,117.1 368.5,117.1 369.0,117.1 369.5,117.1 370.0,117.1 370.5,117.1 371.0,117.1 371.5,117.1 372.0,117.1 372.5,117.1 373.0,117.1 373.5,117.1 374.0,117.1 374.5,116.5 375.0,116.5 375.5,116.5 376.0,116.5 376.5,116.5 377.0,121.8 377.5,127.2 378.0,132.7 378.5,138.1 379.0,143.6 379.5,148.0 380.0,148.0 380.5,148.0 381.0,148.0 381.5,148.0 382.0,143.6 382.5,138.0 383.0,132.4 383.5,126.9 384.0,121.3 384.5,115.8 385.0,115.8 385.5,115.8 386.0,115.8 386.5,115.8 387.0,115.8 387.5,115.8 388.0,115.8 388.5,115.1 389.0,115.1 389.5,115.1 390.0,115.1 390.5,115.1 391.0,115.1 391.5,115.1 392.0,115.1 392.5,115.1 393.0,115.1 393.5,115.1 394.0,115.1 394.5,115.1 395.0,115.1 395.5,115.1 396.0,114.5 396.5,114.5 397.0,114.5 397.5,114.5 398.0,114.5 398.5,114.5 399.0,114.5 399.5,114.5 400.0,114.5 400.5,114.5 401.0,114.5 401.5,114.5 402.0,114.5 402.5,113.8 403.0,113.8 403.5,113.8 404.0,113.8 404.5,113.8 405.0,113.8 405.5,113.8 406.0,113.8 406.5,113.8 407.0,113.8 407.5,113.8 408.0,113.8 408.5,113.8 409.0,113.8 409.5,113.8 410.0,113.1 410.5,113.1 411.0,113.1 411.5,113.1 412.0,113.1 412.5,113.1 413.0,113.1 413.5,113.1 414.0,113.1 414.5,113.1 415.0,113.1 415.5,113.1 416.0,113.1 416.5,112.5 417.0,112.5 417.5,112.5 418.0,112.5 418.5,112.5 419.0,112.5 419.5,112.5 420.0,112.5 420.5,112.5 421.0,112.5 421.5,112.5 422.0,112.5 422.5,112.5 423.0,112.5 423.5,112.5 424.0,111.8 424.5,111.8 425.0,111.8 425.5,111.8 426.0,111.8 426.5,111.8 427.0,111.8 427.5,111.8 428.0,111.8 428.5,111.8 429.0,111.8 429.5,111.8 430.0,111.8 430.5,111.1 431.0,111.1 431.5,111.1 432.0,111.1 432.5,111.1 433.0,111.1 433.5,111.1 434.0,111.1 434.5,111.1 435.0,111.1 435.5,111.1 436.0,111.1 436.5,111.1 437.0,111.1 437.5,111.1 438.0,110.3 438.5,110.3 439.0,110.3 439.5,110.3 440.0,110.3 440.5,110.3 441.0,110.3 441.5,110.3 442.0,110.3 442.5,110.3 443.0,110.3 443.5,110.3 444.0,110.3 444.5,109.6 445.0,109.6 445.5,109.6 446.0,109.6 446.5,109.6 447.0,109.6 447.5,109.6 448.0,109.6 448.5,109.6 449.0,109.6 449.5,109.6 450.0,109.6 450.5,109.6 451.0,109.6 451.5,109.6 452.0,108.8 452.5,108.8 453.0,108.8 453.5,108.8 454.0,108.8 454.5,108.8 455.0,108.8 455.5,108.8 456.0,108.8 456.5,108.8 457.0,108.8 457.5,108.8 458.0,108.8 458.5,108.1 459.0,108.1 459.5,108.1 460.0,108.1 460.5,108.1 461.0,108.1 461.5,108.1 462.0,108.1 462.5,108.1 463.0,108.1 463.5,108.1 464.0,108.1 464.5,108.1 465.0,108.1 465.5,108.1 466.0,107.3 466.5,107.3 467.0,107.3 467.5,107.3 468.0,107.3 468.5,107.3 469.0,107.3 469.5,108.4 470.0,114.8 470.5,121.3 471.0,127.8 471.5,134.4 472.0,137.0 472.5,134.4 473.0,127.8 473.5,121.2 474.0,114.5 474.5,107.9 475.0,106.6 475.5,106.6 476.0,113.3 476.5,120.2 477.0,127.1 477.5,134.0 478.0,141.0 478.5,141.0 479.0,135.4 479.5,128.4 480.0,121.4 480.5,114.3 481.0,107.3 481.5,105.8 482.0,105.8 482.5,105.8 483.0,105.8 483.5,105.8 484.0,105.8 484.5,105.8 485.0,105.8 485.5,105.8 486.0,105.8 486.5,105.1 487.0,105.1 487.5,111.9 488.0,120.3 488.5,128.8 489.0,137.2 489.5,145.7 490.0,152.5 490.5,152.5 491.0,147.4 491.5,138.9 492.0,130.3 492.5,121.8 493.0,113.2 493.5,105.1 494.0,104.7 494.5,104.7 495.0,110.5 495.5,116.3 496.0,122.2 496.5,128.0 497.0,133.9 497.5,139.8 498.0,141.0 498.5,139.8 499.0,133.9 499.5,128.0 500.0,122.0 500.5,116.1 501.0,110.1 501.5,104.2 502.0,104.2 502.5,104.2 503.0,104.2 503.5,104.2 504.0,104.2 504.5,106.7 505.0,113.6 505.5,120.6 506.0,127.5 506.5,134.4 507.0,140.0 507.5,140.0 508.0,135.8 508.5,128.8 509.0,121.8 509.5,114.8 510.0,107.8 510.5,103.8 511.0,103.8 511.5,103.8 512.0,103.8 512.5,103.8 513.0,103.8 513.5,103.8 514.0,103.8 514.5,103.3 515.0,103.3 515.5,103.3 516.0,103.3 516.5,103.3 517.0,103.3 517.5,103.3 518.0,103.3 518.5,103.3 519.0,103.3 520.5,118.0 522.5,138.5"/>
<polyline fill="none" stroke="#ff00ff" stroke-width="1.2" shape-rendering="auto" points="62.5,355.0 62.5,288.0 62.5,299.2 63.2,298.2 64.0,298.2 64.8,299.8 65.5,294.7 66.2,300.2 67.0,298.7 67.8,299.6 68.5,299.4 69.2,300.9 70.0,301.6 70.8,301.6 71.5,299.3 72.2,301.6 73.0,301.3 73.8,301.2 74.5,299.9 75.2,301.3 76.0,299.9 76.8,300.7 77.5,300.0 78.2,300.3 79.0,300.0 79.8,299.7 80.5,301.1 81.2,301.5 82.0,300.2 82.8,300.5 83.5,301.2 84.2,299.4 85.0,301.2 85.8,299.9 86.5,297.4 87.2,299.2 88.0,299.5 88.8,300.3 89.5,300.0 90.2,298.9 91.0,300.3 91.8,301.2 92.5,300.0 93.2,299.5 94.0,298.3 94.8,295.7 95.5,293.5 96.2,298.2 97.0,299.2 97.8,299.3 98.5,300.4 99.2,298.7 100.0,299.8 100.8,300.1 101.5,300.8 102.2,301.0 103.0,299.7 103.8,301.0 104.5,301.0 105.2,297.4 106.0,299.2 106.8,299.7 107.5,300.6 108.2,300.8 109.0,299.7 109.8,299.7 110.5,300.0 111.2,301.1 112.0,300.2 112.8,300.2 113.5,300.5 114.2,299.1 115.0,299.4 115.8,301.1 116.5,301.1 117.2,299.4 118.0,300.0 118.8,299.8 119.5,301.1 120.2,300.2 121.0,300.3 121.8,299.7 122.5,299.4 123.2,300.9 124.0,299.2 124.8,300.1 125.5,300.6 126.2,299.6 127.0,299.2 127.8,300.2 128.5,300.9 129.2,300.6 130.0,299.3 130.8,301.0 131.5,300.6 132.2,300.9 133.0,301.1 133.8,300.2 134.5,300.9 135.2,301.0 136.0,301.0 136.8,299.9 137.5,299.3 138.2,297.4 139.0,301.1 139.8,301.0 140.5,299.7 141.2,299.2 142.0,299.2 142.8,301.2 143.5,299.5 144.2,300.9 145.0,298.1 145.8,299.5 146.5,300.0 147.2,301.1 148.0,299.6 148.8,300.6 149.5,300.0 150.2,300.2 151.0,300.9 151.8,301.0 152.5,300.6 153.2,299.0 154.0,301.0 154.8,301.2 155.5,300.9 156.2,297.9 157.0,299.3 157.8,300.0 158.5,299.6 159.2,299.4 160.0,300.7 160.8,300.1 161.5,300.2 162.2,300.9 163.0,299.9 163.8,299.9 164.5,298.9 165.2,299.3 166.0,295.1 166.8,296.7 167.5,295.7 168.2,296.6 169.0,298.8 169.8,300.0 170.5,299.8 171.2,299.8 172.0,300.4 172.8,302.1 173.5,301.2 174.2,303.3 175.0,301.0 175.8,304.3 176.5,303.4 177.2,304.7 178.0,306.6 178.8,306.2 179.5,307.0 180.2,306.2 181.0,305.6 181.8,306.2 182.5,307.0 183.2,305.1 184.0,306.5 184.8,304.9 185.5,305.4 186.2,303.9 187.0,304.9 187.8,304.2 188.5,302.6 189.2,301.3 190.0,302.1 190.8,301.7 191.5,300.3 192.2,300.7 193.0,300.8 193.8,299.9 194.5,299.9 195.2,301.8 196.0,301.7 196.8,300.3 197.5,301.4 198.2,300.6 199.0,301.1 199.8,300.6 200.5,301.9 201.2,301.7 202.0,301.4 202.8,302.0 203.5,302.2 204.2,296.6 205.0,302.0 205.8,302.2 206.5,300.5 207.2,300.1 208.0,301.9 208.8,300.8 209.5,301.5 210.2,300.7 211.0,300.5 211.8,300.2 212.5,302.2 213.2,299.8 214.0,302.1 214.8,300.7 215.5,300.4 216.2,302.1 217.0,298.1 217.8,299.8 218.5,301.6 219.2,301.8 220.0,301.4 220.8,302.1 221.5,300.1 222.2,301.6 223.0,300.8 223.8,300.1 224.5,301.3 225.2,299.8 226.0,301.5 226.8,300.0 227.5,300.3 228.2,300.8 229.0,301.8 229.8,297.7 230.5,300.2 231.2,302.3 232.0,301.5 232.8,302.1 233.5,300.0 234.2,301.2 235.0,301.7 235.8,300.3 236.5,301.4 237.2,300.6 238.0,301.4 238.8,303.7 239.5,304.8 240.2,308.2 241.0,306.5 241.8,301.8 242.5,300.8 243.2,301.8 244.0,300.4 244.8,301.9 245.5,301.7 246.2,302.0 247.0,302.2 247.8,300.3 248.5,300.5 249.2,300.4 250.0,301.1 250.8,301.1 251.5,301.1 252.2,299.6 253.0,302.0 253.8,300.3 254.5,300.6 255.2,302.1 256.0,300.8 256.8,301.7 257.5,300.5 258.2,302.1 259.0,299.7 259.8,301.1 260.5,300.4 261.2,302.0 262.0,300.5 262.8,301.6 263.5,300.9 264.2,300.0 265.0,300.1 265.8,301.0 266.5,301.0 267.2,300.0 268.0,302.0 268.8,300.9 269.5,299.7 270.2,301.5 271.0,301.2 271.8,300.4 272.5,300.7 273.2,302.0 274.0,300.0 274.8,301.4 275.5,299.6 276.2,300.6 277.0,300.4 277.8,300.0 278.5,301.1 279.2,301.1 280.0,299.6 280.8,300.9 281.5,301.6 282.2,301.4 283.0,300.4 283.8,299.4 284.5,301.0 285.2,297.9 286.0,300.0 286.8,299.6 287.5,300.6 288.2,299.9 289.0,300.0 289.8,300.0 290.5,298.8 291.2,301.6 292.0,301.5 292.8,301.3 293.5,299.4 294.2,301.5 295.0,301.3 295.8,300.3 296.5,299.7 297.2,301.5 298.0,300.9 298.8,299.4 299.5,301.4 300.2,300.4 301.0,301.1 301.8,300.3 302.5,300.4 303.2,300.2 304.0,300.5 304.8,299.8 305.5,300.5 306.2,300.4 307.0,300.2 307.8,300.0 308.5,301.5 309.2,299.8 310.0,301.5 310.8,300.6 311.5,301.0 312.2,299.3 313.0,301.4 313.8,301.7 314.5,300.3 315.2,300.3 316.0,300.8 316.8,299.5 317.5,300.6 318.2,296.8 319.0,301.4 319.8,300.1 320.5,300.9 321.2,300.6 322.0,300.6 322.8,301.0 323.5,301.1 324.2,300.7 325.0,300.0 325.8,300.6 326.5,300.5 327.2,300.7 328.0,299.2 328.8,299.2 329.5,299.4 330.2,300.7 331.0,300.9 331.8,300.9 332.5,301.1 333.2,300.4 334.0,299.9 334.8,301.2 335.5,301.0 336.2,300.1 337.0,301.4 337.8,300.0 338.5,301.0 339.2,301.2 340.0,299.4 340.8,300.5 341.5,300.0 342.2,299.4 343.0,299.5 343.8,301.2 344.5,301.5 345.2,298.2 346.0,301.5 346.8,301.5 347.5,299.1 348.2,300.9 349.0,300.4 349.8,299.4 350.5,300.0 351.2,300.6 352.0,299.4 352.8,299.2 353.5,299.5 354.2,299.4 355.0,301.1 355.8,300.9 356.5,301.2 357.2,301.0 358.0,301.1 358.8,299.2 359.5,301.3 360.2,300.4 361.0,299.1 361.8,300.9 362.5,298.9 363.2,300.0 364.0,295.8 364.8,300.3 365.5,300.9 366.2,300.6 367.0,299.9 367.8,301.3 368.5,300.5 369.2,300.1 370.0,300.3 370.8,299.5 371.5,300.0 372.2,299.2 373.0,301.2 373.8,300.9 374.5,301.3 375.2,300.7 376.0,298.9 376.8,300.4 377.5,300.0 378.2,299.3 379.0,300.4 379.8,299.6 380.5,300.1 381.2,300.1 382.0,300.3 382.8,300.9 383.5,300.4 384.2,300.4 385.0,300.1 385.8,299.7 386.5,300.5 387.2,300.9 388.0,300.4 388.8,301.3 389.5,299.5 390.2,299.9 391.0,301.0 391.8,298.9 392.5,298.9 393.2,295.1 394.0,294.4 394.8,293.2 395.5,295.8 396.2,298.9 397.0,301.2 397.8,300.7 398.5,298.8 399.2,301.0 400.0,299.8 400.7,300.0 400.7,355.0"/>
<polyline fill="none" stroke="#ff00ff" stroke-width="1.2" shape-rendering="auto" points="401.0,355.0 401.0,306.0 401.5,306.1 402.2,304.2 403.0,304.5 403.8,306.0 404.5,303.8 405.2,303.2 406.0,299.9 406.8,301.0 407.5,299.7 408.2,300.5 409.0,298.3 409.8,297.5 410.5,296.7 411.2,295.7 412.0,296.4 412.8,295.1 413.5,295.7 414.2,296.4 415.0,297.6 415.8,295.8 416.5,295.8 417.2,298.3 418.0,297.8 418.8,296.9 419.5,296.1 420.2,296.9 421.0,296.5 421.8,296.1 422.5,296.8 423.2,297.0 424.0,297.9 424.8,298.6 425.5,296.4 426.2,296.3 427.0,296.2 427.8,296.1 428.5,294.7 429.2,289.7 430.0,290.3 430.8,296.1 431.5,297.7 432.2,298.0 433.0,298.8 433.8,299.1 434.5,299.1 435.2,298.1 436.0,298.9 436.8,299.7 437.5,299.6 438.2,298.3 439.0,299.3 439.8,297.2 440.5,298.3 441.2,298.3 442.0,298.3 442.8,298.6 443.5,299.7 444.2,298.0 445.0,298.2 445.8,299.5 446.5,298.6 447.2,298.7 448.0,299.8 448.8,297.1 449.5,298.5 450.2,299.6 451.0,298.7 451.8,298.2 452.5,297.6 453.2,299.3 454.0,299.1 454.8,297.7 455.5,297.3 456.2,298.9 457.0,299.1 457.8,299.7 458.5,299.3 459.2,297.6 460.0,299.6 460.8,298.4 461.5,299.5 462.2,299.3 463.0,299.7 463.8,298.0 464.5,298.4 465.2,298.3 466.0,298.4 466.8,298.0 467.5,297.1 468.2,297.5 469.0,298.0 469.8,297.4 470.5,298.3 471.2,297.6 472.0,298.4 472.8,296.7 473.5,297.3 474.2,296.8 475.0,297.4 475.8,296.4 476.5,296.3 477.2,294.8 478.0,294.4 478.8,292.4 479.5,293.3 480.2,292.7 481.0,291.3 481.8,292.1 482.5,292.0 483.2,291.6 484.0,292.9 484.8,289.8 485.5,290.7 486.2,289.5 487.0,289.1 487.8,288.8 488.5,289.7 489.2,289.1 490.0,286.4 490.8,286.3 491.5,286.7 492.2,286.0 493.0,284.1 493.8,281.4 494.5,283.7 495.2,285.5 496.0,287.9 496.8,289.4 497.5,287.7 498.2,289.6 499.0,289.3 499.8,289.5 500.5,289.2 501.2,289.9 502.0,292.0 502.8,292.5 503.5,291.9 504.2,293.0 505.0,295.6 505.8,293.7 506.5,295.2 507.2,294.2 508.0,296.0 508.8,294.9 509.5,296.0 510.2,295.3 511.0,296.8 511.8,294.6 512.5,296.9 513.2,295.4 514.0,292.5 514.8,292.0 515.5,292.4 516.2,292.9 517.0,290.5 517.8,286.7 518.5,286.2 519.2,281.4 520.0,283.5 520.8,289.4 521.5,290.6 522.2,292.0 523.0,292.3 523.8,290.4 524.5,292.0 525.2,291.8 526.0,290.5 526.8,290.5"/>
<rect x="314.8" y="300" width="1.6" height="55" fill="#ff00ff"/>
<rect x="493.8" y="283" width="1.6" height="72" fill="#ff00ff"/>
<rect x="62" y="288" width="1" height="67" fill="#ff00ff"/>
<rect x="400" y="304" width="1.6" height="51" fill="#ff00ff"/>
<rect x="528" y="73" width="1" height="132" fill="#d4d4d4"/>
<rect x="528" y="223" width="1" height="132" fill="#d4d4d4"/>
</svg>
<!-- buttons -->
<div class="btn" style="left:562px;top:59px;width:68px;"></div>
<div class="btn def" style="left:654px;top:59px;width:68px;"><i></i></div>
<!-- disc info group -->
<div class="grp" style="left:561px;top:88px;width:162px;height:69px;"></div>
<div class="cap" style="left:567px;top:82px;width:62px;"></div>
<!-- settings group -->
<div class="grp" style="left:561px;top:161px;width:162px;height:179px;"></div>
<div class="cap" style="left:567px;top:155px;width:47px;"></div>
<div class="edit" style="left:631px;top:170px;width:82px;height:20px;border-color:#8aa6dc;"></div>
<div style="left:695px;top:171px;width:17px;height:18px;border:1px solid #f4f4f8;border-radius:2px;background:linear-gradient(to bottom,#ececf0,#d4d4dc 60%,#c2c2cc);box-shadow:inset 0 0 0 1px #c6c8d6;">
 <svg width="15" height="16" viewBox="0 0 15 16" style="position:absolute;left:0;top:0"><path d="M3.6 5.6L7.4 9.6L11.2 5.6" stroke="#141c30" stroke-width="1.8" fill="none"/></svg></div>
<div class="edit" style="left:631px;top:194px;width:70px;height:18px;"></div>
<div class="edit" style="left:631px;top:217px;width:70px;height:18px;"></div>
<div class="cb" style="left:569px;top:242px;"></div>
<div class="cb" style="left:569px;top:261px;"><svg width="11" height="11" viewBox="0 0 11 11"><path d="M2.4 5.4L4.8 7.9L9.2 3" stroke="#21c021" stroke-width="2" fill="none"/></svg></div>
<div class="cb" style="left:569px;top:276px;"><svg width="11" height="11" viewBox="0 0 11 11"><path d="M2.4 5.4L4.8 7.9L9.2 3" stroke="#21c021" stroke-width="2" fill="none"/></svg></div>
<div class="cb" style="left:569px;top:291px;"><svg width="11" height="11" viewBox="0 0 11 11"><path d="M2.4 5.4L4.8 7.9L9.2 3" stroke="#21c021" stroke-width="2" fill="none"/></svg></div>
<div class="cb" style="left:569px;top:306px;"><svg width="11" height="11" viewBox="0 0 11 11"><path d="M2.4 5.4L4.8 7.9L9.2 3" stroke="#21c021" stroke-width="2" fill="none"/></svg></div>
<div class="cb" style="left:569px;top:321px;"><svg width="11" height="11" viewBox="0 0 11 11"><path d="M2.4 5.4L4.8 7.9L9.2 3" stroke="#21c021" stroke-width="2" fill="none"/></svg></div>
<!-- quality / progress groups -->
<div class="grp" style="left:561px;top:344px;width:162px;height:24px;"></div>
<div class="grp" style="left:561px;top:374px;width:162px;height:63px;"></div>
<!-- bottom groups -->
<div class="grpb" style="left:18px;top:375px;width:170px;height:62px;"></div>
<div class="cap" style="left:26px;top:368px;width:58px;"></div>
<div class="sq" style="left:28px;top:371px;background:#00ffff;"></div>
<div class="grpb" style="left:198px;top:375px;width:170px;height:62px;"></div>
<div class="cap" style="left:206px;top:368px;width:57px;"></div>
<div class="sq" style="left:208px;top:371px;background:#ffb428;"></div>
<div class="grpb" style="left:379px;top:375px;width:170px;height:46px;"></div>
<div class="cap" style="left:387px;top:368px;width:43px;"></div>
<div class="sq" style="left:389px;top:371px;background:#ff00ff;"></div>

<span class="t" style="top:7.5px;color:#000;font-weight:bold;left:7.18px;letter-spacing:1.27px;">CD</span>
<span class="t" style="top:7.5px;color:#000;font-weight:bold;left:30.46px;letter-spacing:0.96px;">Speed</span>
<span class="t" style="top:7.5px;color:#000;font-weight:bold;left:73.33px;transform:scaleX(1.529);transform-origin:0 0;">:</span>
<span class="t" style="top:7.5px;color:#000;font-weight:bold;left:84.33px;letter-spacing:0.25px;">Disc</span>
<span class="t" style="top:7.5px;color:#000;font-weight:bold;left:116.66px;letter-spacing:0.80px;">Quality</span>
<span class="t" style="top:7.5px;color:#000;font-weight:bold;left:167.81px;letter-spacing:1.25px;">Test</span>
<span class="t" style="top:7.5px;color:#000;font-weight:bold;left:200.28px;transform:scaleX(2.200);transform-origin:0 0;">-</span>
<span class="t" style="top:7.5px;color:#000;font-weight:bold;left:216.33px;letter-spacing:-0.09px;">BENQ</span>
<span class="t" style="top:7.5px;color:#000;font-weight:bold;left:272.33px;letter-spacing:-0.16px;">DVD</span>
<span class="t" style="top:7.5px;color:#000;font-weight:bold;left:304.33px;letter-spacing:-0.33px;">DD</span>
<span class="t" style="top:7.5px;color:#000;font-weight:bold;left:327.33px;letter-spacing:0.65px;">DW1620</span>
<span class="t" style="top:7.5px;color:#000;font-weight:bold;left:399.33px;letter-spacing:0.88px;">B7T9</span>
<span class="t" style="top:36.6px;color:#000;left:21.50px;letter-spacing:-0.14px;">Disc Quality</span>
<span class="t" style="top:56.0px;color:#000;left:272.28px;letter-spacing:-0.58px;">recorded</span>
<span class="t" style="top:56.0px;color:#000;left:320.37px;letter-spacing:-0.01px;">with</span>
<span class="t" style="top:56.0px;color:#000;left:345.00px;letter-spacing:-0.83px;">BENQ</span>
<span class="t" style="top:56.0px;color:#000;left:393.00px;letter-spacing:-0.88px;">DVD</span>
<span class="t" style="top:56.0px;color:#000;left:420.50px;letter-spacing:-0.75px;">DD</span>
<span class="t" style="top:56.0px;color:#000;left:440.50px;letter-spacing:-1.22px;">DW1620</span>
<span class="t" style="top:56.0px;color:#000;left:497.75px;letter-spacing:-0.58px;">vB7T9</span>
<span class="t" style="top:65.0px;color:#000;left:42.84px;letter-spacing:-1.60px;">50</span>
<span class="t" style="top:91.5px;color:#000;left:42.64px;letter-spacing:-1.60px;">40</span>
<span class="t" style="top:118.0px;color:#000;left:42.93px;letter-spacing:-1.60px;">30</span>
<span class="t" style="top:144.0px;color:#000;left:43.05px;letter-spacing:-1.60px;">20</span>
<span class="t" style="top:170.5px;color:#000;left:42.00px;letter-spacing:-0.99px;">10</span>
<span class="t" style="top:76.0px;color:#000;left:531.64px;letter-spacing:-0.09px;">48</span>
<span class="t" style="top:95.0px;color:#000;left:531.64px;letter-spacing:-0.76px;">40</span>
<span class="t" style="top:115.5px;color:#000;left:531.93px;letter-spacing:-0.36px;">32</span>
<span class="t" style="top:136.0px;color:#000;left:532.05px;letter-spacing:-0.68px;">24</span>
<span class="t" style="top:155.5px;color:#000;left:531.00px;letter-spacing:0.52px;">16</span>
<span class="t" style="top:176.0px;color:#000;left:532.12px;transform:scaleX(0.934);transform-origin:0 0;">8</span>
<span class="t" style="top:215.5px;color:#000;left:42.00px;letter-spacing:-0.99px;">10</span>
<span class="t" style="top:242.0px;color:#000;left:49.14px;transform:scaleX(0.933);transform-origin:0 0;">8</span>
<span class="t" style="top:268.0px;color:#000;left:49.03px;transform:scaleX(0.965);transform-origin:0 0;">6</span>
<span class="t" style="top:294.5px;color:#000;left:48.66px;transform:scaleX(0.861);transform-origin:0 0;">4</span>
<span class="t" style="top:320.0px;color:#000;left:49.08px;transform:scaleX(0.935);transform-origin:0 0;">2</span>
<span class="t" style="top:215.5px;color:#000;left:532.05px;letter-spacing:-0.45px;">20</span>
<span class="t" style="top:242.0px;color:#000;left:531.00px;letter-spacing:0.52px;">16</span>
<span class="t" style="top:268.0px;color:#000;left:531.00px;letter-spacing:0.43px;">12</span>
<span class="t" style="top:294.0px;color:#000;left:532.12px;transform:scaleX(0.934);transform-origin:0 0;">8</span>
<span class="t" style="top:319.5px;color:#000;left:531.64px;transform:scaleX(0.870);transform-origin:0 0;">4</span>
<span class="t" style="top:204.0px;color:#000;left:64.23px;transform:scaleX(0.897);transform-origin:0 0;">0</span>
<span class="t" style="top:204.0px;color:#000;left:116.50px;letter-spacing:-0.79px;">10</span>
<span class="t" style="top:204.0px;color:#000;left:176.05px;letter-spacing:-1.60px;">20</span>
<span class="t" style="top:204.0px;color:#000;left:234.93px;letter-spacing:-1.60px;">30</span>
<span class="t" style="top:204.0px;color:#000;left:292.14px;letter-spacing:-1.60px;">40</span>
<span class="t" style="top:204.0px;color:#000;left:350.34px;letter-spacing:-1.60px;">50</span>
<span class="t" style="top:204.0px;color:#000;left:409.50px;letter-spacing:-1.60px;">60</span>
<span class="t" style="top:204.0px;color:#000;left:466.73px;letter-spacing:-1.60px;">70</span>
<span class="t" style="top:204.0px;color:#000;left:525.63px;letter-spacing:-1.60px;">80</span>
<span class="t" style="top:354.0px;color:#000;left:64.23px;transform:scaleX(0.897);transform-origin:0 0;">0</span>
<span class="t" style="top:354.0px;color:#000;left:116.50px;letter-spacing:-0.79px;">10</span>
<span class="t" style="top:354.0px;color:#000;left:176.05px;letter-spacing:-1.60px;">20</span>
<span class="t" style="top:354.0px;color:#000;left:234.93px;letter-spacing:-1.60px;">30</span>
<span class="t" style="top:354.0px;color:#000;left:292.14px;letter-spacing:-1.60px;">40</span>
<span class="t" style="top:354.0px;color:#000;left:350.34px;letter-spacing:-1.60px;">50</span>
<span class="t" style="top:354.0px;color:#000;left:409.50px;letter-spacing:-1.60px;">60</span>
<span class="t" style="top:354.0px;color:#000;left:466.73px;letter-spacing:-1.60px;">70</span>
<span class="t" style="top:354.0px;color:#000;left:525.63px;letter-spacing:-1.60px;">80</span>
<span class="t" style="top:59.5px;color:#000;font-size:13px;left:582.69px;transform:scaleX(0.996);transform-origin:0 0;">開始</span>
<span class="t" style="top:59.5px;color:#000;font-size:13px;left:665.80px;transform:scaleX(1.012);transform-origin:0 0;">終了(X)</span>
<span class="t" style="top:79.5px;color:#0a3cac;font-size:13px;left:568.05px;transform:scaleX(0.766);transform-origin:0 0;">ディスク情報</span>
<span class="t" style="top:92.8px;color:#000;font-size:13px;left:567.59px;transform:scaleX(0.675);transform-origin:0 0;">タイプ:</span>
<span class="t" style="top:107.7px;color:#000;left:567.84px;letter-spacing:-0.53px;">ID:</span>
<span class="t" style="top:122.3px;color:#000;font-size:13px;left:567.46px;transform:scaleX(0.944);transform-origin:0 0;">日付:</span>
<span class="t" style="top:137.0px;color:#000;left:569.00px;letter-spacing:-0.73px;">Label:</span>
<span class="t" style="top:93.0px;color:#00007c;left:616.00px;letter-spacing:-0.23px;">Data CD</span>
<span class="t" style="top:107.7px;color:#00007c;left:616.74px;letter-spacing:-0.23px;">Taiyo Yuden</span>
<span class="t" style="top:122.5px;color:#00007c;left:617.05px;letter-spacing:-0.06px;">2 April 2005</span>
<span class="t" style="top:137.0px;color:#00007c;left:617.03px;letter-spacing:-1.14px;">CDS_TEST_A2</span>
<span class="t" style="top:152.5px;color:#0a3cac;left:569.00px;letter-spacing:-0.12px;">Settings</span>
<span class="t" style="top:170.5px;color:#000;font-size:13px;left:568.89px;transform:scaleX(0.936);transform-origin:0 0;">転送速度</span>
<span class="t" style="top:171.5px;color:#000;font-size:13px;left:634.82px;transform:scaleX(0.903);transform-origin:0 0;">最大</span>
<span class="t" style="top:196.0px;color:#000;font-size:13px;left:567.66px;transform:scaleX(0.962);transform-origin:0 0;">開始</span>
<span class="t" style="top:194.3px;color:#000;left:634.23px;letter-spacing:-0.98px;">00:00.00</span>
<span class="t" style="top:219.0px;color:#000;font-size:13px;left:567.74px;transform:scaleX(0.944);transform-origin:0 0;">終了位置</span>
<span class="t" style="top:217.3px;color:#000;left:634.23px;letter-spacing:-1.02px;">79:57.72</span>
<span class="t" style="top:240.5px;color:#000;left:585.09px;letter-spacing:-0.63px;">Quick</span>
<span class="t" style="top:240.5px;color:#000;left:617.00px;letter-spacing:-0.69px;">Scan</span>
<span class="t" style="top:260.0px;color:#000;left:584.00px;letter-spacing:-0.95px;">Show</span>
<span class="t" style="top:260.0px;color:#000;left:616.03px;letter-spacing:-0.29px;">C1/PIE</span>
<span class="t" style="top:274.5px;color:#000;left:584.00px;letter-spacing:-0.95px;">Show</span>
<span class="t" style="top:274.5px;color:#000;left:616.03px;letter-spacing:-0.21px;">C2/PIF</span>
<span class="t" style="top:289.5px;color:#000;left:584.00px;letter-spacing:-0.95px;">Show</span>
<span class="t" style="top:289.5px;color:#000;left:616.12px;letter-spacing:0.05px;">Jitter</span>
<span class="t" style="top:304.5px;color:#000;left:584.00px;letter-spacing:-0.95px;">Show</span>
<span class="t" style="top:304.5px;color:#000;left:616.00px;letter-spacing:-0.79px;">Read</span>
<span class="t" style="top:304.5px;color:#000;left:645.00px;letter-spacing:-0.62px;">Speed</span>
<span class="t" style="top:319.5px;color:#000;left:584.00px;letter-spacing:-0.95px;">Show</span>
<span class="t" style="top:319.5px;color:#000;left:616.27px;letter-spacing:-0.51px;">Write</span>
<span class="t" style="top:319.5px;color:#000;left:645.00px;letter-spacing:-0.62px;">Speed</span>
<span class="t" style="top:347.5px;color:#000;font-size:13px;left:567.55px;transform:scaleX(0.764);transform-origin:0 0;">品質スコア:</span>
<span class="t" style="top:347.5px;color:#00007c;left:694.54px;letter-spacing:-0.65px;">93</span>
<span class="t" style="top:380.0px;color:#000;font-size:13px;left:567.52px;transform:scaleX(0.911);transform-origin:0 0;">進行状況:</span>
<span class="t" style="top:380.0px;color:#00007c;left:678.00px;letter-spacing:-1.01px;">100</span>
<span class="t" style="top:380.0px;color:#00007c;left:701.71px;transform:scaleX(0.600);transform-origin:0 0;">%</span>
<span class="t" style="top:399.0px;color:#000;font-size:13px;left:568.31px;transform:scaleX(0.691);transform-origin:0 0;">ポジション:</span>
<span class="t" style="top:399.0px;color:#00007c;left:667.23px;letter-spacing:-1.04px;">79:55.00</span>
<span class="t" style="top:417.0px;color:#000;font-size:13px;left:567.46px;transform:scaleX(0.901);transform-origin:0 0;">速度:</span>
<span class="t" style="top:417.0px;color:#00007c;left:670.64px;letter-spacing:-1.07px;">41.67</span>
<span class="t" style="top:417.0px;color:#00007c;left:701.04px;transform:scaleX(0.953);transform-origin:0 0;">X</span>
<span class="t" style="top:366.0px;color:#000;font-size:13px;left:40.03px;transform:scaleX(0.750);transform-origin:0 0;">CDエラー</span>
<span class="t" style="top:380.5px;color:#000;font-size:13px;left:27.21px;transform:scaleX(0.880);transform-origin:0 0;">平均:</span>
<span class="t" style="top:399.0px;color:#000;font-size:13px;left:26.84px;transform:scaleX(0.889);transform-origin:0 0;">最大:</span>
<span class="t" style="top:417.0px;color:#000;font-size:13px;left:25.73px;transform:scaleX(0.953);transform-origin:0 0;">合計 :</span>
<span class="t" style="top:380.5px;color:#00007c;left:155.23px;letter-spacing:-0.92px;">0.68</span>
<span class="t" style="top:399.0px;color:#00007c;left:162.14px;letter-spacing:-1.01px;">43</span>
<span class="t" style="top:417.0px;color:#00007c;left:150.93px;letter-spacing:-0.55px;">3237</span>
<span class="t" style="top:366.0px;color:#000;font-size:13px;left:219.53px;transform:scaleX(0.761);transform-origin:0 0;">C2エラー</span>
<span class="t" style="top:380.5px;color:#000;font-size:13px;left:209.21px;transform:scaleX(0.880);transform-origin:0 0;">平均:</span>
<span class="t" style="top:399.0px;color:#000;font-size:13px;left:208.84px;transform:scaleX(0.889);transform-origin:0 0;">最大:</span>
<span class="t" style="top:417.0px;color:#000;font-size:13px;left:207.73px;transform:scaleX(0.953);transform-origin:0 0;">合計 :</span>
<span class="t" style="top:380.5px;color:#00007c;left:337.23px;letter-spacing:-0.91px;">0.00</span>
<span class="t" style="top:399.0px;color:#00007c;left:350.74px;transform:scaleX(0.937);transform-origin:0 0;">0</span>
<span class="t" style="top:417.0px;color:#00007c;left:350.74px;transform:scaleX(0.937);transform-origin:0 0;">0</span>
<span class="t" style="top:366.0px;color:#000;left:402.12px;letter-spacing:-0.09px;">Jitter</span>
<span class="t" style="top:380.5px;color:#000;font-size:13px;left:389.21px;transform:scaleX(0.880);transform-origin:0 0;">平均:</span>
<span class="t" style="top:399.0px;color:#000;font-size:13px;left:388.84px;transform:scaleX(0.889);transform-origin:0 0;">最大:</span>
<span class="t" style="top:380.5px;color:#00007c;left:507.63px;letter-spacing:-1.13px;">8.23</span>
<span class="t" style="top:380.5px;color:#00007c;left:531.72px;transform:scaleX(0.668);transform-origin:0 0;">%</span>
<span class="t" style="top:399.0px;color:#00007c;left:506.50px;letter-spacing:-0.46px;">11.0</span>
<span class="t" style="top:399.0px;color:#00007c;left:531.72px;transform:scaleX(0.668);transform-origin:0 0;">%</span>
</div></body></html>
